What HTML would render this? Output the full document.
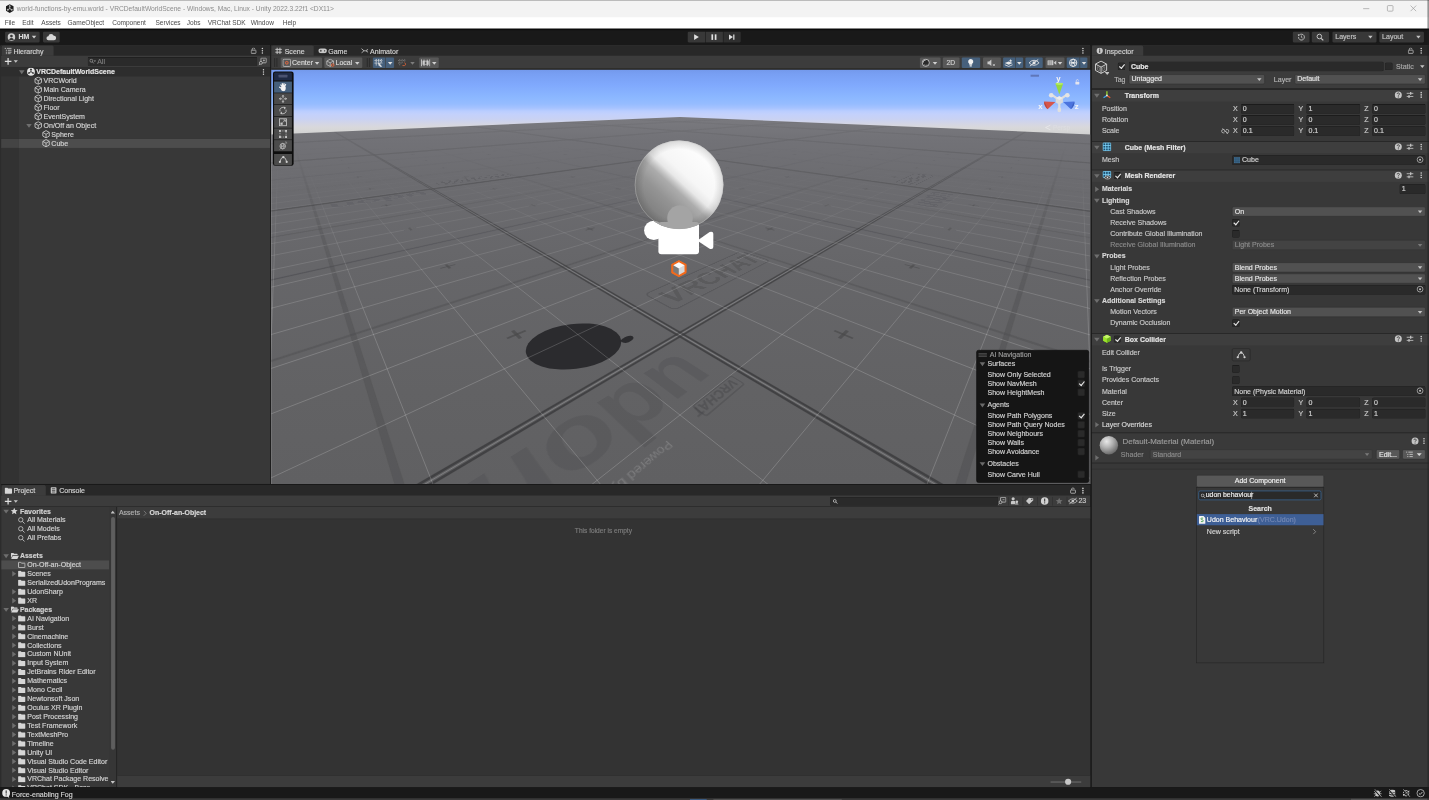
<!DOCTYPE html>
<html lang="en"><head><meta charset="utf-8"><title>Unity Editor</title>
<style>
html,body{margin:0;padding:0;background:#191919;}
body{width:1429px;height:800px;overflow:hidden;position:relative;font-family:"Liberation Sans",sans-serif;}
#root{position:absolute;left:0;top:0;width:2560px;height:1434px;transform:scale(0.558203);transform-origin:0 0;filter:saturate(1.001);overflow:hidden;font-size:12.6px;color:#c8c8c8;line-height:16px;-webkit-text-stroke:0.3px;}
#root div,#root span,#root svg{position:absolute;box-sizing:border-box;white-space:nowrap;}
.t{color:#c8c8c8;height:16px;line-height:16px;}
.b{font-weight:bold;font-size:12.5px;}
.dim{color:#8a8a8a;}
.panel{background:#383838;}
.tabbar{background:#282828;}
.tab{background:#3c3c3c;height:19px;top:0;border-top:2px solid #3c3c3c;}
.tb{background:#3c3c3c;border-bottom:1px solid #232323;}
.fld{background:#2a2a2a;border:1px solid #212121;border-top-color:#0d0d0d;border-radius:3px;height:18px;line-height:16px;padding-left:3px;color:#d2d2d2;}
.dd{background:#515151;border:1px solid #303030;border-radius:3px;height:18px;line-height:16px;padding-left:4px;color:#e4e4e4;}
.dd:after{content:"";position:absolute;right:5px;top:6px;border-left:4px solid transparent;border-right:4px solid transparent;border-top:5px solid #c4c4c4;}
.dd.dis{background:#434343;color:#8a8a8a;border-color:#343434;}
.dd.dis:after{border-top-color:#7a7a7a;}
.cb{background:#2a2a2a;border:1px solid #212121;border-top-color:#0d0d0d;border-radius:3px;width:14px;height:14px;}
.cb.on:after{content:"";position:absolute;left:4px;top:0px;width:4px;height:8px;border:solid #e8e8e8;border-width:0 2px 2px 0;transform:rotate(40deg);}
.hdr{background:#3e3e3e;border-top:1px solid #1a1a1a;height:22px;left:0;right:0;}
.arr{width:0;height:0;border-left:5px solid transparent;border-right:5px solid transparent;border-top:7px solid #6e6e6e;margin-left:-1px;}
.arr.r{border-top:5px solid transparent;border-bottom:5px solid transparent;border-left:7px solid #6e6e6e;border-right:none;margin-top:-1px;margin-left:0}
.sep{background:#1a1a1a;height:1px;left:0;right:0;}
.tbtn{background:#383838;border-radius:2px;height:19px;}
.sbtn{background:#585858;border-radius:2px;height:20px;}
.sbtn.on{background:#46607c;}
.ov{background:#151515;}
</style></head><body>
<div id="root">
<div style="left:0;top:81px;width:2px;height:1353px;background:#2c2c2c"></div>
<div style="left:0;top:0;width:2560px;height:40px;background:#f3f3f3;"></div><div style="left:0;top:0;width:2560px;height:1.3px;background:#8e8e8e;"></div>
<svg style="left:10px;top:7px;width:15px;height:17px" viewBox="0 0 15 17"><path d="M7.5 0.5 L14.3 4.4 V12.4 L7.5 16.4 L0.7 12.4 V4.4 Z" fill="#1c1c1c"/><path d="M7.5 8.4 V3 M7.5 8.4 L3 11 M7.5 8.4 L12 11" stroke="#f3f3f3" stroke-width="1.3" fill="none"/><path d="M7.5 3 L5.8 4.6 M7.5 3 L9.2 4.6 M3 11 L3.4 8.8 M3 11 L5.2 11.6 M12 11 L11.6 8.8 M12 11 L9.8 11.6" stroke="#f3f3f3" stroke-width="1" fill="none"/></svg>
<div id="title" style="left:30px;top:6px;height:18px;line-height:18px;font-size:11.95px;color:#8c8c8c;-webkit-text-stroke:0;">world-functions-by-emu.world - VRCDefaultWorldScene - Windows, Mac, Linux - Unity 2022.3.22f1 &lt;DX11&gt;</div>
<svg style="left:2420px;top:0;width:140px;height:31px" viewBox="0 0 140 31"><path d="M22 15.5 H33" stroke="#9a9a9a" stroke-width="1.2"/><rect x="65.5" y="10" width="10" height="10" rx="1.5" fill="none" stroke="#9a9a9a" stroke-width="1.2"/><path d="M107 10 L117 20 M117 10 L107 20" stroke="#9a9a9a" stroke-width="1.2"/></svg>
<div style="left:0;top:31px;width:2560px;height:21px;background:#ffffff;"></div>
<div class="mi" style="left:8.4px;top:32px;height:18px;line-height:18px;font-size:11.7px;color:#4a4a4a;-webkit-text-stroke:0;">File</div>
<div class="mi" style="left:39.8px;top:32px;height:18px;line-height:18px;font-size:11.7px;color:#4a4a4a;-webkit-text-stroke:0;">Edit</div>
<div class="mi" style="left:74.0px;top:32px;height:18px;line-height:18px;font-size:11.7px;color:#4a4a4a;-webkit-text-stroke:0;">Assets</div>
<div class="mi" style="left:121.0px;top:32px;height:18px;line-height:18px;font-size:11.7px;color:#4a4a4a;-webkit-text-stroke:0;">GameObject</div>
<div class="mi" style="left:201.0px;top:32px;height:18px;line-height:18px;font-size:11.7px;color:#4a4a4a;-webkit-text-stroke:0;">Component</div>
<div class="mi" style="left:278.6px;top:32px;height:18px;line-height:18px;font-size:11.7px;color:#4a4a4a;-webkit-text-stroke:0;">Services</div>
<div class="mi" style="left:334.6px;top:32px;height:18px;line-height:18px;font-size:11.7px;color:#4a4a4a;-webkit-text-stroke:0;">Jobs</div>
<div class="mi" style="left:372.0px;top:32px;height:18px;line-height:18px;font-size:11.7px;color:#4a4a4a;-webkit-text-stroke:0;">VRChat SDK</div>
<div class="mi" style="left:449.0px;top:32px;height:18px;line-height:18px;font-size:11.7px;color:#4a4a4a;-webkit-text-stroke:0;">Window</div>
<div class="mi" style="left:506.6px;top:32px;height:18px;line-height:18px;font-size:11.7px;color:#4a4a4a;-webkit-text-stroke:0;">Help</div>
<div style="left:0;top:51px;width:2560px;height:30px;background:#191919;"></div>
<div style="left:0;top:52px;width:2560px;height:2px;background:#0a0a0a;"></div>
<div class="tbtn" style="left:9px;top:57px;width:62px;height:19px;"></div>
<svg style="left:13px;top:59px;width:15px;height:15px" viewBox="0 0 15 15"><circle cx="7.5" cy="7.5" r="6.8" fill="#d0d0d0"/><circle cx="7.5" cy="5.6" r="2.4" fill="#383838"/><path d="M3 11.6 Q7.5 6.8 12 11.6 Q7.5 15 3 11.6Z" fill="#383838"/></svg>
<div class="t b" style="left:33px;top:58px;color:#d8d8d8;">HM</div>
<div style="left:57px;top:64px;border-left:4.5px solid transparent;border-right:4.5px solid transparent;border-top:5px solid #d0d0d0;width:0;height:0"></div>
<div class="tbtn" style="left:77px;top:57px;width:30px;height:19px;"></div>
<svg style="left:82px;top:59px;width:20px;height:15px" viewBox="0 0 20 15"><path d="M5 13 a3.6 3.6 0 0 1 -0.3 -7.2 a5 5 0 0 1 9.6 -0.6 a3.9 3.9 0 0 1 0.7 7.8 Z" fill="#d8d8d8"/></svg>
<div style="left:1231.5px;top:57px;width:31px;height:19px;background:#383838;border-radius:2px 0 0 2px"></div>
<div style="left:1263.5px;top:57px;width:31px;height:19px;background:#383838;border-radius:0"></div>
<div style="left:1295.5px;top:57px;width:31px;height:19px;background:#2f2f2f;border-radius:0 2px 2px 0"></div>
<svg style="left:1231px;top:57px;width:96px;height:19px" viewBox="0 0 96 19"><path d="M12.5 4.5 L21 9.5 L12.5 14.5Z" fill="#e0e0e0"/><rect x="43.5" y="4.5" width="3" height="10" fill="#e0e0e0"/><rect x="49.5" y="4.5" width="3" height="10" fill="#e0e0e0"/><path d="M75 4.8 L82 9.5 L75 14.2Z" fill="#e0e0e0"/><rect x="82.5" y="4.8" width="2.2" height="9.4" fill="#e0e0e0"/></svg>
<div class="tbtn" style="left:2316px;top:57px;width:30px;"></div>
<svg style="left:2323px;top:59px;width:16px;height:15px" viewBox="0 0 16 15"><path d="M3.2 7.5 a5.3 5.3 0 1 0 1.6 -3.8" fill="none" stroke="#d0d0d0" stroke-width="1.4"/><path d="M2 2.2 L5.6 3.2 L3 5.9Z" fill="#d0d0d0"/><path d="M8.4 4.6 V7.8 L10.6 9.2" fill="none" stroke="#d0d0d0" stroke-width="1.3"/></svg>
<div class="tbtn" style="left:2350px;top:57px;width:31px;"></div>
<svg style="left:2357px;top:59px;width:16px;height:15px" viewBox="0 0 16 15"><circle cx="6.6" cy="6.4" r="4.1" fill="none" stroke="#d0d0d0" stroke-width="1.6"/><path d="M9.8 9.6 L13.6 13.4" stroke="#d0d0d0" stroke-width="2"/></svg>
<div class="tbtn" style="left:2387px;top:57px;width:79px;"></div>
<div class="t" style="left:2392px;top:58px;color:#c4c4c4;">Layers</div>
<div style="left:2451px;top:64px;border-left:4.5px solid transparent;border-right:4.5px solid transparent;border-top:5px solid #c4c4c4;width:0;height:0"></div>
<div class="tbtn" style="left:2471px;top:57px;width:80px;"></div>
<div class="t" style="left:2476px;top:58px;color:#c4c4c4;">Layout</div>
<div style="left:2537px;top:64px;border-left:4.5px solid transparent;border-right:4.5px solid transparent;border-top:5px solid #c4c4c4;width:0;height:0"></div>
<div class="panel" style="left:2px;top:81px;width:482px;height:786px;overflow:hidden">
<div class="tabbar" style="left:0;top:0;width:482px;height:19px"></div>
<div class="tab" style="left:1px;width:93px;border-radius:3px 3px 0 0"></div>
<svg style="left:5.5px;top:4px;width:13px;height:12px" viewBox="0 0 13 12"><path d="M0 1.5 H3 M4.5 1.5 H13 M2.5 5 H4.5 M6 5 H13 M2.5 8.5 H4.5 M6 8.5 H13 M2.5 11.5 H4.5 M6 11.5 H11" stroke="#c8c8c8" stroke-width="1.6"/></svg>
<div class="t" style="left:22px;top:3px;color:#d2d2d2">Hierarchy</div>
<svg style="left:446px;top:3px;width:10.5px;height:11.5px;margin:1px 0 0 1px" viewBox="0 0 12 13"><rect x="1" y="5.5" width="10" height="6.5" rx="1" fill="none" stroke="#c4c4c4" stroke-width="1.6"/><path d="M3.2 5.5 V3.6 a2.6 2.6 0 0 1 5.2 0" fill="none" stroke="#c4c4c4" stroke-width="1.5"/></svg>
<svg style="left:466px;top:3px;width:4px;height:14px" viewBox="0 0 4 14"><circle cx="2" cy="3" r="1.45" fill="#d0d0d0"/><circle cx="2" cy="7" r="1.45" fill="#d0d0d0"/><circle cx="2" cy="11" r="1.45" fill="#d0d0d0"/></svg>
<div class="tb" style="left:0;top:19px;width:482px;height:21px"></div>
<svg style="left:6px;top:22px;width:26px;height:14px" viewBox="0 0 26 14"><path d="M6.5 1 V13 M0.5 7 H12.5" stroke="#e0e0e0" stroke-width="2.2"/><path d="M16.5 5 H24 L20.2 9.5Z" fill="#c4c4c4"/></svg>
<div class="fld" style="left:155px;top:21px;width:304px;height:16px;border-radius:2px"></div>
<svg style="left:158px;top:24px;width:12px;height:10px" viewBox="0 0 12 10"><circle cx="3.6" cy="3.8" r="2.6" fill="none" stroke="#9a9a9a" stroke-width="1.4"/><path d="M5.6 5.8 L8 8.6" stroke="#9a9a9a" stroke-width="1.5"/><path d="M8 3.6 H12 L10 6Z" fill="#9a9a9a"/></svg>
<div class="t dim" style="left:172px;top:21px;color:#7c7c7c">All</div>
<svg style="left:461px;top:22px;width:15px;height:15px" viewBox="0 0 15 15"><rect x="4.5" y="1" width="9.5" height="8.5" rx="1" fill="none" stroke="#c4c4c4" stroke-width="1.4"/><circle cx="4.4" cy="9.6" r="2.6" fill="#3c3c3c" stroke="#c4c4c4" stroke-width="1.4"/><path d="M2.4 11.6 L0.6 13.8" stroke="#c4c4c4" stroke-width="1.5"/><path d="M8 5.2 H11.5 M9.7 3.4 V7" stroke="#c4c4c4" stroke-width="1.2"/></svg>
<div style="left:0;top:56px;width:32px;height:746px;background:#323232"></div>
<div style="left:0;top:40px;width:482px;height:16px;background:#2d2d2d"></div>
<div style="left:32px;top:168px;width:450px;height:16px;background:#4d4d4d"></div>
<div style="left:0px;top:168px;width:32px;height:16px;background:#444444"></div>
<div class="arr" style="left:33px;top:45px"></div>
<svg style="left:46px;top:40px;width:15px;height:15px" viewBox="0 0 15 15"><circle cx="7.5" cy="7.5" r="7" fill="#e6e6e6"/><path d="M7.5 7.5 V2.2 M7.5 7.5 L3 10.2 M7.5 7.5 L12 10.2" stroke="#2d2d2d" stroke-width="1.6"/><path d="M7.5 1.6 L5.3 4.2 H9.7Z M2.3 10.6 L5.6 11.2 L3.6 7.6Z M12.7 10.6 L9.4 11.2 L11.4 7.6Z" fill="#2d2d2d"/></svg>
<div class="t b" style="left:63px;top:40px;color:#e4e4e4">VRCDefaultWorldScene</div>
<svg style="left:468px;top:41px;width:4px;height:14px" viewBox="0 0 4 14"><circle cx="2" cy="3" r="1.45" fill="#d0d0d0"/><circle cx="2" cy="7" r="1.45" fill="#d0d0d0"/><circle cx="2" cy="11" r="1.45" fill="#d0d0d0"/></svg>
<svg style="left:59px;top:56px;width:15px;height:15px" viewBox="0 0 15 15"><path d="M7.5 1 L13.3 4.2 V10.8 L7.5 14 L1.7 10.8 V4.2 Z M1.9 4.3 L7.5 7.5 L13.1 4.3 M7.5 7.5 V14" fill="none" stroke="#cfcfcf" stroke-width="1.5" stroke-linejoin="round"/></svg>
<div class="t" style="left:76px;top:56px;color:#d2d2d2">VRCWorld</div>
<svg style="left:59px;top:72px;width:15px;height:15px" viewBox="0 0 15 15"><path d="M7.5 1 L13.3 4.2 V10.8 L7.5 14 L1.7 10.8 V4.2 Z M1.9 4.3 L7.5 7.5 L13.1 4.3 M7.5 7.5 V14" fill="none" stroke="#cfcfcf" stroke-width="1.5" stroke-linejoin="round"/></svg>
<div class="t" style="left:76px;top:72px;color:#d2d2d2">Main Camera</div>
<svg style="left:59px;top:88px;width:15px;height:15px" viewBox="0 0 15 15"><path d="M7.5 1 L13.3 4.2 V10.8 L7.5 14 L1.7 10.8 V4.2 Z M1.9 4.3 L7.5 7.5 L13.1 4.3 M7.5 7.5 V14" fill="none" stroke="#cfcfcf" stroke-width="1.5" stroke-linejoin="round"/></svg>
<div class="t" style="left:76px;top:88px;color:#d2d2d2">Directional Light</div>
<svg style="left:59px;top:104px;width:15px;height:15px" viewBox="0 0 15 15"><path d="M7.5 1 L13.3 4.2 V10.8 L7.5 14 L1.7 10.8 V4.2 Z M1.9 4.3 L7.5 7.5 L13.1 4.3 M7.5 7.5 V14" fill="none" stroke="#cfcfcf" stroke-width="1.5" stroke-linejoin="round"/></svg>
<div class="t" style="left:76px;top:104px;color:#d2d2d2">Floor</div>
<svg style="left:59px;top:120px;width:15px;height:15px" viewBox="0 0 15 15"><path d="M7.5 1 L13.3 4.2 V10.8 L7.5 14 L1.7 10.8 V4.2 Z M1.9 4.3 L7.5 7.5 L13.1 4.3 M7.5 7.5 V14" fill="none" stroke="#cfcfcf" stroke-width="1.5" stroke-linejoin="round"/></svg>
<div class="t" style="left:76px;top:120px;color:#d2d2d2">EventSystem</div>
<div class="arr" style="left:46px;top:141px"></div>
<svg style="left:59px;top:136px;width:15px;height:15px" viewBox="0 0 15 15"><path d="M7.5 1 L13.3 4.2 V10.8 L7.5 14 L1.7 10.8 V4.2 Z M1.9 4.3 L7.5 7.5 L13.1 4.3 M7.5 7.5 V14" fill="none" stroke="#cfcfcf" stroke-width="1.5" stroke-linejoin="round"/></svg>
<div class="t" style="left:76px;top:136px;color:#d2d2d2">On/Off an Object</div>
<svg style="left:73px;top:152px;width:15px;height:15px" viewBox="0 0 15 15"><path d="M7.5 1 L13.3 4.2 V10.8 L7.5 14 L1.7 10.8 V4.2 Z M1.9 4.3 L7.5 7.5 L13.1 4.3 M7.5 7.5 V14" fill="none" stroke="#cfcfcf" stroke-width="1.5" stroke-linejoin="round"/></svg>
<div class="t" style="left:90px;top:152px;color:#d2d2d2">Sphere</div>
<svg style="left:73px;top:168px;width:15px;height:15px" viewBox="0 0 15 15"><path d="M7.5 1 L13.3 4.2 V10.8 L7.5 14 L1.7 10.8 V4.2 Z M1.9 4.3 L7.5 7.5 L13.1 4.3 M7.5 7.5 V14" fill="none" stroke="#cfcfcf" stroke-width="1.5" stroke-linejoin="round"/></svg>
<div class="t" style="left:90px;top:168px;color:#d2d2d2">Cube</div>
</div>
<div class="panel" style="left:486px;top:81px;width:1467px;height:786px;overflow:hidden;background:#3c3c3c">
<div class="tabbar" style="left:0;top:0;width:1467px;height:19px"></div>
<div class="tab" style="left:0px;width:76px;border-radius:3px 3px 0 0"></div>
<svg style="left:7px;top:4px;width:12px;height:12px" viewBox="0 0 12 12"><path d="M0 3.5 H12 M0 8.5 H12 M3.5 0 V12 M8.5 0 V12" stroke="#c8c8c8" stroke-width="1.7"/></svg>
<div class="t" style="left:24px;top:3px;color:#d2d2d2">Scene</div>
<svg style="left:84px;top:5px;width:16px;height:10px" viewBox="0 0 16 10"><path d="M4.5 0.8 H11.5 A4.2 4.2 0 0 1 11.5 9.2 H4.5 A4.2 4.2 0 0 1 4.5 0.8Z" fill="#c8c8c8"/><path d="M3 5 H6.4 M4.7 3.3 V6.7" stroke="#282828" stroke-width="1.2"/><circle cx="11.5" cy="5" r="1.2" fill="#282828"/></svg>
<div class="t" style="left:102px;top:3px;color:#d2d2d2">Game</div>
<svg style="left:161px;top:5px;width:13px;height:10px" viewBox="0 0 13 10"><path d="M0.5 1 L5 5 L0.5 9 M5 5 H8 M8.2 5 L12.5 2.4 M8.2 5 L12.5 7.6" fill="none" stroke="#c8c8c8" stroke-width="1.5"/></svg>
<div class="t" style="left:177px;top:3px;color:#d2d2d2">Animator</div>
<svg style="left:1452px;top:3px;width:4px;height:14px" viewBox="0 0 4 14"><circle cx="2" cy="3" r="1.45" fill="#d0d0d0"/><circle cx="2" cy="7" r="1.45" fill="#d0d0d0"/><circle cx="2" cy="11" r="1.45" fill="#d0d0d0"/></svg>
<div style="left:0;top:19px;width:1467px;height:25px;background:#3c3c3c;border-bottom:2px solid #1a1509"></div>
<div style="left:5px;top:23px;width:1.5px;height:16px;background:#2c2c2c"></div>
<div style="left:9px;top:23px;width:1.5px;height:16px;background:#2c2c2c"></div>
<div class="sbtn" style="left:17px;top:22px;width:74px;height:19px"></div>
<svg style="left:20px;top:24px;width:16px;height:15px" viewBox="0 0 16 15"><rect x="1" y="1" width="13.5" height="13" rx="2" fill="none" stroke="#c8c8c8" stroke-width="1.4"/><circle cx="7.8" cy="7.5" r="2.4" fill="none" stroke="#f0683a" stroke-width="1.6"/></svg>
<div class="t" style="left:37px;top:23.5px;color:#d8d8d8">Center</div>
<div style="left:78.0px;top:29.5px;border-left:4px solid transparent;border-right:4px solid transparent;border-top:5px solid #d0d0d0;width:0;height:0"></div>
<div class="sbtn" style="left:95px;top:22px;width:68px;height:19px"></div>
<svg style="left:98px;top:24px;width:17px;height:16px" viewBox="0 0 17 16"><path d="M7.5 1 L13.5 4.3 V10.8 L7.5 14 L1.5 10.8 V4.3Z M1.7 4.4 L7.5 7.5 L13.3 4.4 M7.5 7.5 V14" fill="none" stroke="#c8c8c8" stroke-width="1.3"/><circle cx="12" cy="11.6" r="2.3" fill="#585858" stroke="#f0683a" stroke-width="1.5"/></svg>
<div class="t" style="left:115px;top:23.5px;color:#d8d8d8">Local</div>
<div style="left:150.0px;top:29.5px;border-left:4px solid transparent;border-right:4px solid transparent;border-top:5px solid #d0d0d0;width:0;height:0"></div>
<div style="left:171px;top:23px;width:1.5px;height:16px;background:#2c2c2c"></div>
<div style="left:175px;top:23px;width:1.5px;height:16px;background:#2c2c2c"></div>
<div class="sbtn on" style="left:181.5px;top:22px;width:22.5px;height:19px;border-radius:2px 0 0 2px"></div>
<svg style="left:184px;top:24px;width:17px;height:15px" viewBox="0 0 17 15"><path d="M1 3.5 H15 M1 8 H15 M4 0.5 V13 M8.5 0.5 V13 M13 0.5 V8" stroke="#e8e8e8" stroke-width="1.5" stroke-dasharray="2.2 1"/><path d="M8.5 8 L13.5 14 L10.5 13.5Z" fill="#e8e8e8" stroke="#e8e8e8" stroke-width="1.4"/></svg>
<div class="sbtn on" style="left:205px;top:22px;width:15px;height:19px;border-radius:0 2px 2px 0"></div>
<div style="left:208.5px;top:29.5px;border-left:4px solid transparent;border-right:4px solid transparent;border-top:5px solid #e0e0e0;width:0;height:0"></div>
<svg style="left:226px;top:24px;width:17px;height:15px" viewBox="0 0 17 15"><path d="M1 3.5 H14 M1 8 H8 M4 0.5 V13 M8.5 0.5 V8 M13 0.5 V6" stroke="#8c8c8c" stroke-width="1.3" stroke-dasharray="1.6 1.4"/><path d="M9 12.5 H12.5 A2.6 2.6 0 0 0 12.5 7.4" fill="none" stroke="#d8633a" stroke-width="1.5"/></svg>
<div style="left:248.5px;top:29.5px;border-left:4px solid transparent;border-right:4px solid transparent;border-top:5px solid #7c7c7c;width:0;height:0"></div>
<div class="sbtn" style="left:265px;top:22px;width:35px;height:19px"></div>
<svg style="left:268px;top:25px;width:17px;height:13px" viewBox="0 0 17 13"><path d="M1 0 V13 M16 0 V13" stroke="#d0d0d0" stroke-width="1.6"/><path d="M3 3 H14 V10 H3Z" fill="#c8c8c8"/><path d="M5.6 0.5 V12.5 M11.4 0.5 V12.5" stroke="#d0d0d0" stroke-width="1.6"/><path d="M7 4 H10 V9 H7Z" fill="#585858"/></svg>
<div style="left:287.5px;top:29.5px;border-left:4px solid transparent;border-right:4px solid transparent;border-top:5px solid #d0d0d0;width:0;height:0"></div>
<div class="sbtn" style="left:1161.5px;top:22px;width:37.0px;height:19px;border-radius:2px"></div>
<svg style="left:1165px;top:24px;width:15px;height:15px" viewBox="0 0 15 15"><circle cx="7.5" cy="7.5" r="6.4" fill="#2a2a2a" stroke="#d0d0d0" stroke-width="1.5"/><path d="M3.5 9 A4.4 4.4 0 0 0 11 10.6 A6 6 0 0 1 3.5 9Z" fill="#d0d0d0"/><path d="M2.6 7.5 A4.9 4.9 0 0 1 7.5 2.6" stroke="#d0d0d0" stroke-width="1.4" fill="none"/></svg>
<div style="left:1185.0px;top:29.5px;border-left:4px solid transparent;border-right:4px solid transparent;border-top:5px solid #d0d0d0;width:0;height:0"></div>
<div class="sbtn" style="left:1202.5px;top:22px;width:30.0px;height:19px;border-radius:2px"></div>
<div class="t" style="left:1202.5px;width:30px;text-align:center;top:23.5px;color:#d0d0d0;font-size:12px">2D</div>
<div class="sbtn on" style="left:1237.0px;top:22px;width:33.0px;height:19px;border-radius:2px"></div>
<svg style="left:1247px;top:24px;width:12px;height:15px" viewBox="0 0 12 15"><path d="M6 0.8 A4.6 4.6 0 0 1 8.6 9.2 V11 H3.4 V9.2 A4.6 4.6 0 0 1 6 0.8Z" fill="#f0f0f0"/><rect x="3.8" y="12" width="4.4" height="2.2" rx="0.8" fill="#f0f0f0"/></svg>
<div class="sbtn" style="left:1274.5px;top:22px;width:32.0px;height:19px;border-radius:2px"></div>
<svg style="left:1282px;top:25px;width:17px;height:13px" viewBox="0 0 17 13"><path d="M1 4 H4 L8 0.8 V12.2 L4 9 H1Z" fill="#c8c8c8"/><path d="M10.5 8.5 L14.5 12.5 M14.5 8.5 L10.5 12.5" stroke="#c8c8c8" stroke-width="1.4"/></svg>
<div class="sbtn on" style="left:1310.5px;top:22px;width:22.0px;height:19px;border-radius:2px 0 0 2px"></div>
<svg style="left:1313px;top:24px;width:17px;height:15px" viewBox="0 0 17 15"><path d="M1 8 L8 5 L15 8 L8 11Z" fill="#e8e8e8"/><path d="M1 11 L8 14 L15 11" fill="none" stroke="#e8e8e8" stroke-width="1.4"/><path d="M11.5 0.5 L12.4 2.8 L14.8 3.2 L12.6 4.4 L13 6.5 L11.5 5 L10 6.5 L10.4 4.4 L8.2 3.2 L10.6 2.8Z" fill="#e8e8e8"/></svg>
<div class="sbtn on" style="left:1333.5px;top:22px;width:13.0px;height:19px;border-radius:0 2px 2px 0"></div>
<div style="left:1336.0px;top:29.5px;border-left:4px solid transparent;border-right:4px solid transparent;border-top:5px solid #e0e0e0;width:0;height:0"></div>
<div class="sbtn on" style="left:1351.0px;top:22px;width:31.0px;height:19px;border-radius:2px"></div>
<svg style="left:1356px;top:24px;width:21px;height:15px" viewBox="0 0 21 15"><path d="M1.5 7.5 Q10.5 -1.5 19.5 7.5 Q10.5 16.5 1.5 7.5Z" fill="none" stroke="#e8e8e8" stroke-width="1.5"/><circle cx="10.5" cy="7.5" r="2.8" fill="#e8e8e8"/><path d="M3 13.5 L18 1.5" stroke="#e8e8e8" stroke-width="1.6"/></svg>
<div class="sbtn" style="left:1387.0px;top:22px;width:34.0px;height:19px;border-radius:2px"></div>
<svg style="left:1390px;top:26px;width:17px;height:11px" viewBox="0 0 17 11"><rect x="0.5" y="1" width="10.5" height="9" rx="1.2" fill="#c8c8c8"/><path d="M11.5 5.5 L16.5 1.6 V9.4Z" fill="#c8c8c8"/><path d="M3.5 1 V10 M7 1 V10" stroke="#585858" stroke-width="1"/></svg>
<div style="left:1409.0px;top:29.5px;border-left:4px solid transparent;border-right:4px solid transparent;border-top:5px solid #d0d0d0;width:0;height:0"></div>
<div class="sbtn on" style="left:1425.0px;top:22px;width:23.0px;height:19px;border-radius:2px 0 0 2px"></div>
<svg style="left:1428px;top:23px;width:17px;height:17px" viewBox="0 0 17 17"><circle cx="8.5" cy="8.5" r="6.6" fill="none" stroke="#f0f0f0" stroke-width="1.6"/><ellipse cx="8.5" cy="8.5" rx="3" ry="6.6" fill="none" stroke="#f0f0f0" stroke-width="1.3"/><path d="M2 8.5 H15" stroke="#f0f0f0" stroke-width="1.3"/><circle cx="8.5" cy="8.5" r="2" fill="#f0f0f0"/></svg>
<div class="sbtn on" style="left:1449.0px;top:22px;width:13.0px;height:19px;border-radius:0 2px 2px 0"></div>
<div style="left:1451.5px;top:29.5px;border-left:4px solid transparent;border-right:4px solid transparent;border-top:5px solid #e0e0e0;width:0;height:0"></div>
</div>
<svg style="left:486px;top:125px;width:1467px;height:742px" viewBox="271.29 69.78 818.88 414.19" preserveAspectRatio="none">
<defs>
<linearGradient id="sky" x1="0" y1="69" x2="0" y2="135" gradientUnits="userSpaceOnUse">
<stop offset="0.000" stop-color="#7398ea"/>
<stop offset="0.076" stop-color="#789ff3"/>
<stop offset="0.242" stop-color="#80a9fd"/>
<stop offset="0.439" stop-color="#8cb8ff"/>
<stop offset="0.530" stop-color="#96bcff"/>
<stop offset="0.591" stop-color="#a6c3ff"/>
<stop offset="0.636" stop-color="#b9cdff"/>
<stop offset="0.682" stop-color="#c3d1fc"/>
<stop offset="0.758" stop-color="#c9d2f3"/>
<stop offset="0.818" stop-color="#d2d5e7"/>
<stop offset="0.879" stop-color="#d8d8dc"/>
<stop offset="0.939" stop-color="#d6d6d6"/>
<stop offset="1.000" stop-color="#cfcfcf"/>
</linearGradient>
<linearGradient id="flr" x1="0" y1="117" x2="0" y2="484" gradientUnits="userSpaceOnUse"><stop offset="0" stop-color="#7a7a7f"/><stop offset="0.06" stop-color="#727277"/><stop offset="0.17" stop-color="#6c6c70"/><stop offset="0.4" stop-color="#666669"/><stop offset="0.75" stop-color="#626264"/><stop offset="1" stop-color="#606062"/></linearGradient>
<linearGradient id="gfade" x1="0" y1="117" x2="0" y2="484" gradientUnits="userSpaceOnUse"><stop offset="0" stop-color="#fff" stop-opacity="0"/><stop offset="0.13" stop-color="#fff" stop-opacity="0"/><stop offset="0.2" stop-color="#fff" stop-opacity="0.12"/><stop offset="0.3" stop-color="#fff" stop-opacity="0.4"/><stop offset="0.45" stop-color="#fff" stop-opacity="0.78"/><stop offset="0.65" stop-color="#fff" stop-opacity="1"/><stop offset="1" stop-color="#fff" stop-opacity="1"/></linearGradient>
<mask id="gm" maskUnits="userSpaceOnUse" x="270" y="100" width="822" height="386"><rect x="270" y="100" width="822" height="386" fill="url(#gfade)"/></mask>
<linearGradient id="dfade" x1="0" y1="117" x2="0" y2="484" gradientUnits="userSpaceOnUse"><stop offset="0" stop-color="#fff" stop-opacity="0.1"/><stop offset="0.06" stop-color="#fff" stop-opacity="0.2"/><stop offset="0.15" stop-color="#fff" stop-opacity="0.42"/><stop offset="0.3" stop-color="#fff" stop-opacity="0.7"/><stop offset="0.5" stop-color="#fff" stop-opacity="0.92"/><stop offset="0.7" stop-color="#fff" stop-opacity="1"/><stop offset="1" stop-color="#fff" stop-opacity="1"/></linearGradient>
<mask id="dm" maskUnits="userSpaceOnUse" x="270" y="100" width="822" height="386"><rect x="270" y="100" width="822" height="386" fill="url(#dfade)"/></mask>
<linearGradient id="sph" x1="0.85" y1="0.13" x2="0.17" y2="0.87"><stop offset="0" stop-color="#ffffff"/><stop offset="0.38" stop-color="#f6f6f6"/><stop offset="0.47" stop-color="#e8e8e8"/><stop offset="0.52" stop-color="#c8c8c8"/><stop offset="0.57" stop-color="#acacac"/><stop offset="0.72" stop-color="#949494"/><stop offset="0.88" stop-color="#868686"/><stop offset="1" stop-color="#7e7e7e"/></linearGradient>
<linearGradient id="dfade2" x1="0" y1="117" x2="0" y2="484" gradientUnits="userSpaceOnUse"><stop offset="0" stop-color="#fff" stop-opacity="0"/><stop offset="0.08" stop-color="#fff" stop-opacity="0"/><stop offset="0.16" stop-color="#fff" stop-opacity="0.3"/><stop offset="0.3" stop-color="#fff" stop-opacity="0.7"/><stop offset="0.5" stop-color="#fff" stop-opacity="0.92"/><stop offset="0.7" stop-color="#fff" stop-opacity="1"/><stop offset="1" stop-color="#fff" stop-opacity="1"/></linearGradient>
<mask id="dm2" maskUnits="userSpaceOnUse" x="270" y="100" width="822" height="386"><rect x="270" y="100" width="822" height="386" fill="url(#dfade2)"/></mask>
<radialGradient id="sph2" cx="0.5" cy="0.5" r="0.5"><stop offset="0" stop-color="#000" stop-opacity="0"/><stop offset="0.8" stop-color="#000" stop-opacity="0"/><stop offset="1" stop-color="#000" stop-opacity="0.14"/></radialGradient>
<clipPath id="sphc"><circle cx="679.1" cy="184.8" r="44.3"/></clipPath>
<clipPath id="flc"><polygon points="268.0,134.6 680.0,117.0 1094.0,134.6 1094.0,488.0 268.0,488.0"/></clipPath>
</defs>
<rect x="270" y="68" width="822" height="420" fill="url(#sky)"/>
<polygon points="268.0,134.6 680.0,117.0 1094.0,134.6 1094.0,488.0 268.0,488.0" fill="url(#flr)"/>
<g clip-path="url(#flc)">
<g mask="url(#dm2)">
<polygon points="672.6,117.3 1098.0,136.1 1098.0,136.2 672.3,117.3" fill="#4c4c4f" fill-opacity="0.42" stroke="#4c4c4f" stroke-opacity="0.16" stroke-width="0.35"/>
<polygon points="659.8,117.9 1098.0,138.5 1098.0,138.5 659.7,117.9" fill="#47474a" fill-opacity="0.55" stroke="#47474a" stroke-opacity="0.3" stroke-width="0.4"/>
<polygon points="646.4,118.4 1098.0,141.2 1098.0,141.3 646.1,118.5" fill="#4c4c4f" fill-opacity="0.42" stroke="#4c4c4f" stroke-opacity="0.16" stroke-width="0.35"/>
<polygon points="616.6,119.7 1098.0,147.9 1098.0,148.0 616.3,119.7" fill="#4c4c4f" fill-opacity="0.42" stroke="#4c4c4f" stroke-opacity="0.16" stroke-width="0.35"/>
<polygon points="600.0,120.4 1098.0,152.2 1098.0,152.3 599.8,120.4" fill="#47474a" fill-opacity="0.55" stroke="#47474a" stroke-opacity="0.3" stroke-width="0.4"/>
<polygon points="582.3,121.2 1098.0,157.3 1098.0,157.4 582.0,121.2" fill="#4c4c4f" fill-opacity="0.42" stroke="#4c4c4f" stroke-opacity="0.16" stroke-width="0.35"/>
<polygon points="542.7,122.9 1098.0,171.2 1098.0,171.4 542.3,122.9" fill="#4c4c4f" fill-opacity="0.42" stroke="#4c4c4f" stroke-opacity="0.16" stroke-width="0.35"/>
<polygon points="520.3,123.8 1098.0,181.1 1098.0,181.3 520.0,123.8" fill="#47474a" fill-opacity="0.55" stroke="#47474a" stroke-opacity="0.3" stroke-width="0.4"/>
<polygon points="496.1,124.8 1098.0,194.1 1098.0,194.4 495.7,124.9" fill="#4c4c4f" fill-opacity="0.42" stroke="#4c4c4f" stroke-opacity="0.16" stroke-width="0.35"/>
<polygon points="440.8,127.2 1098.0,238.6 1098.0,239.2 440.2,127.2" fill="#4c4c4f" fill-opacity="0.42" stroke="#4c4c4f" stroke-opacity="0.16" stroke-width="0.35"/>
<polygon points="408.9,128.6 1098.0,281.6 1098.0,282.4 408.4,128.6" fill="#47474a" fill-opacity="0.55" stroke="#47474a" stroke-opacity="0.3" stroke-width="0.4"/>
<polygon points="373.8,130.1 1098.0,362.8 1098.0,365.0 373.1,130.1" fill="#4c4c4f" fill-opacity="0.42" stroke="#4c4c4f" stroke-opacity="0.16" stroke-width="0.35"/>
<polygon points="291.1,133.6 407.0,492.0 396.8,492.0 290.3,133.6" fill="#4c4c4f" fill-opacity="0.42" stroke="#4c4c4f" stroke-opacity="0.16" stroke-width="0.35"/>
<polygon points="687.4,117.3 262.0,136.1 262.0,136.2 687.7,117.3" fill="#4c4c4f" fill-opacity="0.42" stroke="#4c4c4f" stroke-opacity="0.16" stroke-width="0.35"/>
<polygon points="700.2,117.9 262.0,138.5 262.0,138.5 700.3,117.9" fill="#47474a" fill-opacity="0.55" stroke="#47474a" stroke-opacity="0.3" stroke-width="0.4"/>
<polygon points="713.6,118.4 262.0,141.2 262.0,141.3 713.9,118.5" fill="#4c4c4f" fill-opacity="0.42" stroke="#4c4c4f" stroke-opacity="0.16" stroke-width="0.35"/>
<polygon points="743.4,119.7 262.0,147.9 262.0,148.0 743.7,119.7" fill="#4c4c4f" fill-opacity="0.42" stroke="#4c4c4f" stroke-opacity="0.16" stroke-width="0.35"/>
<polygon points="760.0,120.4 262.0,152.2 262.0,152.3 760.2,120.4" fill="#47474a" fill-opacity="0.55" stroke="#47474a" stroke-opacity="0.3" stroke-width="0.4"/>
<polygon points="777.7,121.2 262.0,157.3 262.0,157.4 778.0,121.2" fill="#4c4c4f" fill-opacity="0.42" stroke="#4c4c4f" stroke-opacity="0.16" stroke-width="0.35"/>
<polygon points="817.3,122.9 262.0,171.2 262.0,171.4 817.7,122.9" fill="#4c4c4f" fill-opacity="0.42" stroke="#4c4c4f" stroke-opacity="0.16" stroke-width="0.35"/>
<polygon points="839.7,123.8 262.0,181.1 262.0,181.3 840.0,123.8" fill="#47474a" fill-opacity="0.55" stroke="#47474a" stroke-opacity="0.3" stroke-width="0.4"/>
<polygon points="863.9,124.8 262.0,194.1 262.0,194.4 864.3,124.9" fill="#4c4c4f" fill-opacity="0.42" stroke="#4c4c4f" stroke-opacity="0.16" stroke-width="0.35"/>
<polygon points="919.2,127.2 262.0,238.6 262.0,239.2 919.8,127.2" fill="#4c4c4f" fill-opacity="0.42" stroke="#4c4c4f" stroke-opacity="0.16" stroke-width="0.35"/>
<polygon points="951.1,128.6 262.0,281.6 262.0,282.4 951.6,128.6" fill="#47474a" fill-opacity="0.55" stroke="#47474a" stroke-opacity="0.3" stroke-width="0.4"/>
<polygon points="986.2,130.1 262.0,362.8 262.0,365.0 986.9,130.1" fill="#4c4c4f" fill-opacity="0.42" stroke="#4c4c4f" stroke-opacity="0.16" stroke-width="0.35"/>
<polygon points="1068.9,133.6 953.0,492.0 963.2,492.0 1069.7,133.6" fill="#4c4c4f" fill-opacity="0.42" stroke="#4c4c4f" stroke-opacity="0.16" stroke-width="0.35"/>
</g>
<g mask="url(#dm)">
<polygon points="632.0,119.1 1098.0,144.3 1098.0,144.3 631.9,119.1" fill="#3c3c3e" fill-opacity="0.85" stroke="#3c3c3e" stroke-opacity="0.5" stroke-width="0.4"/>
<polygon points="631.7,119.1 1098.0,144.4 1098.0,144.4 631.6,119.1" fill="#3c3c3e" fill-opacity="0.85" stroke="#3c3c3e" stroke-opacity="0.5" stroke-width="0.4"/>
<polygon points="563.4,122.0 1098.0,163.5 1098.0,163.5 563.2,122.0" fill="#3c3c3e" fill-opacity="0.85" stroke="#3c3c3e" stroke-opacity="0.5" stroke-width="0.4"/>
<polygon points="563.0,122.0 1098.0,163.6 1098.0,163.7 562.8,122.0" fill="#3c3c3e" fill-opacity="0.85" stroke="#3c3c3e" stroke-opacity="0.5" stroke-width="0.4"/>
<polygon points="469.9,126.0 1098.0,212.0 1098.0,212.2 469.6,126.0" fill="#3c3c3e" fill-opacity="0.85" stroke="#3c3c3e" stroke-opacity="0.5" stroke-width="0.4"/>
<polygon points="469.3,126.0 1098.0,212.4 1098.0,212.6 469.0,126.0" fill="#3c3c3e" fill-opacity="0.85" stroke="#3c3c3e" stroke-opacity="0.5" stroke-width="0.4"/>
<polygon points="335.0,131.7 956.8,492.0 952.1,492.0 334.6,131.7" fill="#3c3c3e" fill-opacity="0.85" stroke="#3c3c3e" stroke-opacity="0.5" stroke-width="0.4"/>
<polygon points="334.1,131.7 944.9,492.0 940.1,492.0 333.7,131.8" fill="#3c3c3e" fill-opacity="0.85" stroke="#3c3c3e" stroke-opacity="0.5" stroke-width="0.4"/>
<polygon points="728.0,119.1 262.0,144.3 262.0,144.3 728.1,119.1" fill="#3c3c3e" fill-opacity="0.85" stroke="#3c3c3e" stroke-opacity="0.5" stroke-width="0.4"/>
<polygon points="728.3,119.1 262.0,144.4 262.0,144.4 728.4,119.1" fill="#3c3c3e" fill-opacity="0.85" stroke="#3c3c3e" stroke-opacity="0.5" stroke-width="0.4"/>
<polygon points="796.6,122.0 262.0,163.5 262.0,163.5 796.8,122.0" fill="#3c3c3e" fill-opacity="0.85" stroke="#3c3c3e" stroke-opacity="0.5" stroke-width="0.4"/>
<polygon points="797.0,122.0 262.0,163.6 262.0,163.7 797.2,122.0" fill="#3c3c3e" fill-opacity="0.85" stroke="#3c3c3e" stroke-opacity="0.5" stroke-width="0.4"/>
<polygon points="890.1,126.0 262.0,212.0 262.0,212.2 890.4,126.0" fill="#3c3c3e" fill-opacity="0.85" stroke="#3c3c3e" stroke-opacity="0.5" stroke-width="0.4"/>
<polygon points="890.7,126.0 262.0,212.4 262.0,212.6 891.0,126.0" fill="#3c3c3e" fill-opacity="0.85" stroke="#3c3c3e" stroke-opacity="0.5" stroke-width="0.4"/>
<polygon points="1025.0,131.7 403.2,492.0 407.9,492.0 1025.4,131.7" fill="#3c3c3e" fill-opacity="0.85" stroke="#3c3c3e" stroke-opacity="0.5" stroke-width="0.4"/>
<polygon points="1025.9,131.7 415.1,492.0 419.9,492.0 1026.3,131.8" fill="#3c3c3e" fill-opacity="0.85" stroke="#3c3c3e" stroke-opacity="0.5" stroke-width="0.4"/>
<polygon points="889.9,149.9 888.5,150.2 889.2,150.3 890.6,150.0" fill="#48484a" fill-opacity="0.7"/><polygon points="887.5,149.9 887.3,150.0 891.6,150.3 891.8,150.2" fill="#48484a" fill-opacity="0.7"/>
<polygon points="948.0,154.6 946.9,155.1 947.8,155.1 948.8,154.7" fill="#48484a" fill-opacity="0.7"/><polygon points="945.4,154.6 945.2,154.7 950.4,155.1 950.6,155.1" fill="#48484a" fill-opacity="0.7"/>
<polygon points="1018.3,160.4 1017.8,160.9 1018.8,161.0 1019.4,160.5" fill="#48484a" fill-opacity="0.7"/><polygon points="1015.5,160.4 1015.4,160.5 1021.7,161.0 1021.8,160.9" fill="#48484a" fill-opacity="0.7"/>
<polygon points="820.3,149.9 818.5,150.2 819.1,150.3 820.9,150.0" fill="#48484a" fill-opacity="0.7"/><polygon points="818.0,149.9 817.6,150.0 821.5,150.3 821.8,150.2" fill="#48484a" fill-opacity="0.7"/>
<polygon points="871.8,154.6 870.1,155.1 870.9,155.1 872.5,154.7" fill="#48484a" fill-opacity="0.7"/><polygon points="869.2,154.6 868.9,154.7 873.5,155.1 873.8,155.1" fill="#48484a" fill-opacity="0.7"/>
<polygon points="934.1,160.4 932.8,160.9 933.8,161.0 935.0,160.5" fill="#48484a" fill-opacity="0.7"/><polygon points="931.2,160.4 931.0,160.5 936.6,161.0 936.9,160.9" fill="#48484a" fill-opacity="0.7"/>
<polygon points="1011.1,167.5 1010.4,168.2 1011.6,168.3 1012.2,167.6" fill="#48484a" fill-opacity="0.7"/><polygon points="1007.9,167.5 1007.8,167.6 1014.8,168.3 1014.9,168.2" fill="#48484a" fill-opacity="0.7"/>
<polygon points="750.7,149.9 748.4,150.2 749.0,150.3 751.3,150.0" fill="#48484a" fill-opacity="0.7"/><polygon points="748.4,149.9 748.0,150.0 751.3,150.3 751.7,150.2" fill="#48484a" fill-opacity="0.7"/>
<polygon points="795.6,154.6 793.4,155.1 794.0,155.1 796.2,154.7" fill="#48484a" fill-opacity="0.7"/><polygon points="793.0,154.6 792.6,154.7 796.6,155.1 797.0,155.1" fill="#48484a" fill-opacity="0.7"/>
<polygon points="849.9,160.4 847.9,160.9 848.7,161.0 850.7,160.5" fill="#48484a" fill-opacity="0.7"/><polygon points="847.0,160.4 846.7,160.5 851.6,161.0 851.9,160.9" fill="#48484a" fill-opacity="0.7"/>
<polygon points="916.9,167.5 915.4,168.2 916.4,168.3 918.0,167.6" fill="#48484a" fill-opacity="0.7"/><polygon points="913.7,167.5 913.5,167.6 919.6,168.3 919.9,168.2" fill="#48484a" fill-opacity="0.7"/>
<polygon points="1001.9,176.5 1001.0,177.4 1002.4,177.5 1003.2,176.7" fill="#48484a" fill-opacity="0.7"/><polygon points="998.3,176.5 998.1,176.7 1006.0,177.5 1006.2,177.4" fill="#48484a" fill-opacity="0.7"/>
<polygon points="681.2,149.9 678.3,150.2 678.8,150.3 681.7,150.0" fill="#48484a" fill-opacity="0.7"/><polygon points="678.8,149.9 678.3,150.0 681.2,150.3 681.7,150.2" fill="#48484a" fill-opacity="0.7"/>
<polygon points="719.4,154.6 716.6,155.1 717.1,155.1 720.0,154.7" fill="#48484a" fill-opacity="0.7"/><polygon points="716.8,154.6 716.3,154.7 719.7,155.1 720.2,155.1" fill="#48484a" fill-opacity="0.7"/>
<polygon points="765.6,160.4 762.9,160.9 763.6,161.0 766.3,160.5" fill="#48484a" fill-opacity="0.7"/><polygon points="762.8,160.4 762.3,160.5 766.5,161.0 767.0,160.9" fill="#48484a" fill-opacity="0.7"/>
<polygon points="822.8,167.5 820.3,168.2 821.2,168.3 823.7,167.6" fill="#48484a" fill-opacity="0.7"/><polygon points="819.6,167.5 819.2,167.6 824.4,168.3 824.8,168.2" fill="#48484a" fill-opacity="0.7"/>
<polygon points="895.2,176.5 893.2,177.4 894.3,177.5 896.3,176.7" fill="#48484a" fill-opacity="0.7"/><polygon points="891.6,176.5 891.3,176.7 898.0,177.5 898.3,177.4" fill="#48484a" fill-opacity="0.7"/>
<polygon points="989.9,188.3 988.8,189.4 990.3,189.6 991.4,188.5" fill="#48484a" fill-opacity="0.7"/><polygon points="985.8,188.3 985.6,188.5 994.5,189.6 994.7,189.4" fill="#48484a" fill-opacity="0.7"/>
<polygon points="611.6,149.9 608.3,150.2 608.7,150.3 612.0,150.0" fill="#48484a" fill-opacity="0.7"/><polygon points="609.3,149.9 608.7,150.0 611.0,150.3 611.6,150.2" fill="#48484a" fill-opacity="0.7"/>
<polygon points="643.2,154.6 639.8,155.1 640.3,155.1 643.7,154.7" fill="#48484a" fill-opacity="0.7"/><polygon points="640.6,154.6 640.0,154.7 642.9,155.1 643.4,155.1" fill="#48484a" fill-opacity="0.7"/>
<polygon points="681.4,160.4 678.0,160.9 678.6,161.0 682.0,160.5" fill="#48484a" fill-opacity="0.7"/><polygon points="678.6,160.4 678.0,160.5 681.4,161.0 682.0,160.9" fill="#48484a" fill-opacity="0.7"/>
<polygon points="728.7,167.5 725.3,168.2 726.0,168.3 729.4,167.6" fill="#48484a" fill-opacity="0.7"/><polygon points="725.5,167.5 724.9,167.6 729.2,168.3 729.8,168.2" fill="#48484a" fill-opacity="0.7"/>
<polygon points="788.5,176.5 785.3,177.4 786.2,177.5 789.4,176.7" fill="#48484a" fill-opacity="0.7"/><polygon points="784.9,176.5 784.4,176.7 789.9,177.5 790.4,177.4" fill="#48484a" fill-opacity="0.7"/>
<polygon points="866.8,188.3 864.1,189.4 865.3,189.6 868.0,188.5" fill="#48484a" fill-opacity="0.7"/><polygon points="862.6,188.3 862.2,188.5 869.6,189.6 870.0,189.4" fill="#48484a" fill-opacity="0.7"/>
<polygon points="973.6,204.4 972.0,206.0 973.7,206.2 975.3,204.7" fill="#48484a" fill-opacity="0.7"/><polygon points="968.6,204.4 968.4,204.7 978.7,206.2 979.0,206.0" fill="#48484a" fill-opacity="0.7"/>
<polygon points="542.0,149.9 538.2,150.2 538.5,150.3 542.4,150.0" fill="#48484a" fill-opacity="0.7"/><polygon points="539.7,149.9 539.1,150.0 540.9,150.3 541.5,150.2" fill="#48484a" fill-opacity="0.7"/>
<polygon points="567.0,154.6 563.0,155.1 563.4,155.1 567.4,154.7" fill="#48484a" fill-opacity="0.7"/><polygon points="564.4,154.6 563.8,154.7 566.0,155.1 566.6,155.1" fill="#48484a" fill-opacity="0.7"/>
<polygon points="597.2,160.4 593.0,160.9 593.5,161.0 597.7,160.5" fill="#48484a" fill-opacity="0.7"/><polygon points="594.4,160.4 593.7,160.5 596.4,161.0 597.1,160.9" fill="#48484a" fill-opacity="0.7"/>
<polygon points="634.5,167.5 630.2,168.2 630.8,168.3 635.1,167.6" fill="#48484a" fill-opacity="0.7"/><polygon points="631.3,167.5 630.6,167.6 634.0,168.3 634.7,168.2" fill="#48484a" fill-opacity="0.7"/>
<polygon points="681.8,176.5 677.4,177.4 678.2,177.5 682.5,176.7" fill="#48484a" fill-opacity="0.7"/><polygon points="678.2,176.5 677.5,176.7 681.8,177.5 682.6,177.4" fill="#48484a" fill-opacity="0.7"/>
<polygon points="743.6,188.3 739.4,189.4 740.4,189.6 744.6,188.5" fill="#48484a" fill-opacity="0.7"/><polygon points="739.5,188.3 738.8,188.5 744.6,189.6 745.3,189.4" fill="#48484a" fill-opacity="0.7"/>
<polygon points="828.0,204.4 824.2,206.0 825.6,206.2 829.4,204.7" fill="#48484a" fill-opacity="0.7"/><polygon points="823.1,204.4 822.5,204.7 830.6,206.2 831.2,206.0" fill="#48484a" fill-opacity="0.7"/>
<polygon points="949.9,227.6 947.5,230.0 949.6,230.4 952.0,228.0" fill="#48484a" fill-opacity="0.7"/><polygon points="943.9,227.6 943.5,228.0 955.8,230.4 956.1,230.0" fill="#48484a" fill-opacity="0.7"/>
<polygon points="472.5,149.9 468.2,150.2 468.4,150.3 472.7,150.0" fill="#48484a" fill-opacity="0.7"/><polygon points="470.1,149.9 469.4,150.0 470.8,150.3 471.5,150.2" fill="#48484a" fill-opacity="0.7"/>
<polygon points="490.8,154.6 486.2,155.1 486.5,155.1 491.1,154.7" fill="#48484a" fill-opacity="0.7"/><polygon points="488.2,154.6 487.5,154.7 489.1,155.1 489.9,155.1" fill="#48484a" fill-opacity="0.7"/>
<polygon points="513.0,160.4 508.1,160.9 508.4,161.0 513.3,160.5" fill="#48484a" fill-opacity="0.7"/><polygon points="510.1,160.4 509.3,160.5 511.3,161.0 512.1,160.9" fill="#48484a" fill-opacity="0.7"/>
<polygon points="540.4,167.5 535.2,168.2 535.6,168.3 540.8,167.6" fill="#48484a" fill-opacity="0.7"/><polygon points="537.2,167.5 536.3,167.6 538.8,168.3 539.7,168.2" fill="#48484a" fill-opacity="0.7"/>
<polygon points="575.1,176.5 569.6,177.4 570.1,177.5 575.6,176.7" fill="#48484a" fill-opacity="0.7"/><polygon points="571.5,176.5 570.6,176.7 573.8,177.5 574.7,177.4" fill="#48484a" fill-opacity="0.7"/>
<polygon points="620.5,188.3 614.7,189.4 615.4,189.6 621.2,188.5" fill="#48484a" fill-opacity="0.7"/><polygon points="616.4,188.3 615.4,188.5 619.6,189.6 620.6,189.4" fill="#48484a" fill-opacity="0.7"/>
<polygon points="682.5,204.4 676.5,206.0 677.5,206.2 683.5,204.7" fill="#48484a" fill-opacity="0.7"/><polygon points="677.5,204.4 676.5,204.7 682.5,206.2 683.5,206.0" fill="#48484a" fill-opacity="0.7"/>
<polygon points="772.0,227.6 766.3,230.0 767.8,230.4 773.5,228.0" fill="#48484a" fill-opacity="0.7"/><polygon points="766.0,227.6 765.0,228.0 774.0,230.4 774.9,230.0" fill="#48484a" fill-opacity="0.7"/>
<polygon points="912.8,264.2 908.8,268.1 911.3,268.8 915.3,264.8" fill="#48484a" fill-opacity="0.7"/><polygon points="905.0,264.2 904.3,264.8 919.3,268.8 919.9,268.1" fill="#48484a" fill-opacity="0.7"/>
<polygon points="414.6,154.6 409.4,155.1 409.6,155.1 414.8,154.7" fill="#48484a" fill-opacity="0.7"/><polygon points="412.0,154.6 411.2,154.7 412.2,155.1 413.1,155.1" fill="#48484a" fill-opacity="0.7"/>
<polygon points="428.8,160.4 423.1,160.9 423.4,161.0 429.0,160.5" fill="#48484a" fill-opacity="0.7"/><polygon points="425.9,160.4 425.0,160.5 426.2,161.0 427.2,160.9" fill="#48484a" fill-opacity="0.7"/>
<polygon points="446.3,167.5 440.1,168.2 440.4,168.3 446.5,167.6" fill="#48484a" fill-opacity="0.7"/><polygon points="443.1,167.5 442.0,167.6 443.6,168.3 444.6,168.2" fill="#48484a" fill-opacity="0.7"/>
<polygon points="468.4,176.5 461.7,177.4 462.0,177.5 468.7,176.7" fill="#48484a" fill-opacity="0.7"/><polygon points="464.8,176.5 463.7,176.7 465.7,177.5 466.8,177.4" fill="#48484a" fill-opacity="0.7"/>
<polygon points="497.4,188.3 490.0,189.4 490.4,189.6 497.8,188.5" fill="#48484a" fill-opacity="0.7"/><polygon points="493.2,188.3 492.0,188.5 494.7,189.6 495.9,189.4" fill="#48484a" fill-opacity="0.7"/>
<polygon points="536.9,204.4 528.8,206.0 529.4,206.2 537.5,204.7" fill="#48484a" fill-opacity="0.7"/><polygon points="532.0,204.4 530.6,204.7 534.4,206.2 535.8,206.0" fill="#48484a" fill-opacity="0.7"/>
<polygon points="594.0,227.6 585.1,230.0 586.0,230.4 595.0,228.0" fill="#48484a" fill-opacity="0.7"/><polygon points="588.0,227.6 586.5,228.0 592.2,230.4 593.7,230.0" fill="#48484a" fill-opacity="0.7"/>
<polygon points="683.9,264.2 674.4,268.1 676.0,268.8 685.5,264.8" fill="#48484a" fill-opacity="0.7"/><polygon points="676.1,264.2 674.5,264.8 684.0,268.8 685.6,268.1" fill="#48484a" fill-opacity="0.7"/>
<polygon points="845.8,330.0 837.9,337.8 841.1,339.1 848.9,331.3" fill="#48484a" fill-opacity="0.7"/><polygon points="835.0,330.0 833.6,331.3 852.3,339.1 853.6,337.8" fill="#48484a" fill-opacity="0.7"/>
<polygon points="344.5,160.4 338.2,160.9 338.3,161.0 344.6,160.5" fill="#48484a" fill-opacity="0.7"/><polygon points="341.7,160.4 340.6,160.5 341.2,161.0 342.2,160.9" fill="#48484a" fill-opacity="0.7"/>
<polygon points="352.1,167.5 345.1,168.2 345.2,168.3 352.2,167.6" fill="#48484a" fill-opacity="0.7"/><polygon points="348.9,167.5 347.8,167.6 348.4,168.3 349.6,168.2" fill="#48484a" fill-opacity="0.7"/>
<polygon points="361.7,176.5 353.8,177.4 354.0,177.5 361.9,176.7" fill="#48484a" fill-opacity="0.7"/><polygon points="358.1,176.5 356.8,176.7 357.6,177.5 359.0,177.4" fill="#48484a" fill-opacity="0.7"/>
<polygon points="374.2,188.3 365.3,189.4 365.5,189.6 374.4,188.5" fill="#48484a" fill-opacity="0.7"/><polygon points="370.1,188.3 368.6,188.5 369.7,189.6 371.2,189.4" fill="#48484a" fill-opacity="0.7"/>
<polygon points="391.4,204.4 381.0,206.0 381.3,206.2 391.6,204.7" fill="#48484a" fill-opacity="0.7"/><polygon points="386.4,204.4 384.7,204.7 386.3,206.2 388.0,206.0" fill="#48484a" fill-opacity="0.7"/>
<polygon points="416.1,227.6 403.9,230.0 404.2,230.4 416.5,228.0" fill="#48484a" fill-opacity="0.7"/><polygon points="410.1,227.6 408.0,228.0 410.4,230.4 412.5,230.0" fill="#48484a" fill-opacity="0.7"/>
<polygon points="455.0,264.2 440.1,268.1 440.7,268.8 455.7,264.8" fill="#48484a" fill-opacity="0.7"/><polygon points="447.2,264.2 444.7,264.8 448.7,268.8 451.2,268.1" fill="#48484a" fill-opacity="0.7"/>
<polygon points="525.0,330.0 506.4,337.8 507.7,339.1 526.4,331.3" fill="#48484a" fill-opacity="0.7"/><polygon points="514.2,330.0 511.1,331.3 518.9,339.1 522.1,337.8" fill="#48484a" fill-opacity="0.7"/>
</g>
</g>
</svg>

<div style="left:486px;top:124px;width:1467px;height:743px;overflow:hidden">
<div style="left:0;top:0;width:0;height:0;transform-origin:0 0;transform:matrix3d(-1.8510158,-0.070480874,0,-0.0012780718,-0.020578542,-0.070480874,0,-0.0012780718,0,0,1,0,732.19454,475.24828,0,1)">
<div style="left:0;top:0;width:0;height:0;transform-origin:0 0;transform:translate(27.0px,25.0px) scale(1,-1)"><div style="left:0;top:-92.3px;font-size:109.0px;line-height:109.0px;height:109.0px;font-weight:bold;color:#3a3a3d;opacity:0.17;letter-spacing:-2px;-webkit-text-stroke:0">udon</div></div>
<div style="left:0;top:0;width:0;height:0;transform-origin:0 0;transform:translate(-50.0px,-66.0px) scale(-1,1)"><div style="left:-12.0px;top:-58.0px;width:272.0px;height:74.0px;border:3.5px solid #3a3a3d;border-radius:11.0px;opacity:0.28"></div><div style="left:0;top:-52.5px;font-size:62.0px;line-height:62.0px;height:62.0px;font-weight:bold;font-style:italic;color:#3a3a3d;opacity:0.26">VRCHAT</div></div>
<div style="left:0;top:0;width:0;height:0;transform-origin:0 0;transform:translate(27.0px,-1255.0px) scale(1,-1)"><div style="left:0;top:-92.3px;font-size:109.0px;line-height:109.0px;height:109.0px;font-weight:bold;color:#3a3a3d;opacity:0.13;letter-spacing:-2px;-webkit-text-stroke:0">udon</div></div>
<div style="left:0;top:0;width:0;height:0;transform-origin:0 0;transform:translate(-50.0px,-1346.0px) scale(-1,1)"><div style="left:-12.0px;top:-58.0px;width:272.0px;height:74.0px;border:3.5px solid #3a3a3d;border-radius:11.0px;opacity:0.28"></div><div style="left:0;top:-52.5px;font-size:62.0px;line-height:62.0px;height:62.0px;font-weight:bold;font-style:italic;color:#3a3a3d;opacity:0.20">VRCHAT</div></div>
<div style="left:0;top:0;width:0;height:0;transform-origin:0 0;transform:translate(-1253.0px,25.0px) scale(1,-1)"><div style="left:0;top:-92.3px;font-size:109.0px;line-height:109.0px;height:109.0px;font-weight:bold;color:#3a3a3d;opacity:0.13;letter-spacing:-2px;-webkit-text-stroke:0">udon</div></div>
<div style="left:0;top:0;width:0;height:0;transform-origin:0 0;transform:translate(-1330.0px,-66.0px) scale(-1,1)"><div style="left:-12.0px;top:-58.0px;width:272.0px;height:74.0px;border:3.5px solid #3a3a3d;border-radius:11.0px;opacity:0.28"></div><div style="left:0;top:-52.5px;font-size:62.0px;line-height:62.0px;height:62.0px;font-weight:bold;font-style:italic;color:#3a3a3d;opacity:0.20">VRCHAT</div></div>
<div style="left:0;top:0;width:0;height:0;transform-origin:0 0;transform:translate(-1253.0px,-1255.0px) scale(1,-1)"><div style="left:0;top:-92.3px;font-size:109.0px;line-height:109.0px;height:109.0px;font-weight:bold;color:#3a3a3d;opacity:0.13;letter-spacing:-2px;-webkit-text-stroke:0">udon</div></div>
<div style="left:0;top:0;width:0;height:0;transform-origin:0 0;transform:translate(-1330.0px,-1346.0px) scale(-1,1)"><div style="left:-12.0px;top:-58.0px;width:272.0px;height:74.0px;border:3.5px solid #3a3a3d;border-radius:11.0px;opacity:0.28"></div><div style="left:0;top:-52.5px;font-size:62.0px;line-height:62.0px;height:62.0px;font-weight:bold;font-style:italic;color:#3a3a3d;opacity:0.20">VRCHAT</div></div>
<div style="left:0;top:0;width:0;height:0;transform-origin:0 0;transform:translate(130.0px,112.0px) scale(1,-1)"><div style="left:0;top:-10.6px;font-size:12.5px;line-height:12.5px;height:12.5px;color:#e0e0e0;opacity:0.22;-webkit-text-stroke:0">Powered by</div></div>
<div style="left:0;top:0;width:0;height:0;transform-origin:0 0;transform:translate(20.0px,104.0px) scale(1,-1)"><div style="left:-5.0px;top:-17.0px;width:68.0px;height:21.0px;border:2.0px solid #3a3a3d;border-radius:4.0px;opacity:0.28"></div><div style="left:0;top:-14.0px;font-size:16.5px;line-height:16.5px;height:16.5px;font-weight:bold;font-style:italic;color:#3a3a3d;opacity:0.34">VRCHAT</div></div>
</div></div>

<svg style="left:486px;top:125px;width:1467px;height:742px" viewBox="271.29 69.78 818.88 414.19" preserveAspectRatio="none">
<g clip-path="url(#flc)">
<ellipse cx="573.5" cy="346.5" rx="48" ry="22.5" transform="rotate(-7 573.5 346.5)" fill="#2b2b2e"/>
<ellipse cx="627.6" cy="339.3" rx="6.2" ry="3.1" transform="rotate(-20 627.6 339.3)" fill="#2b2b2e"/>
<path d="M619 341.5 L623 338.5 L623 342Z" fill="#2b2b2e"/>
<g mask="url(#gm)" stroke="#ffffff" stroke-opacity="0.34" stroke-width="0.55" fill="none">
<path d="M639.1 118.8L1098.0 142.7M634.6 118.9L1098.0 143.7M629.9 119.1L1098.0 144.8M625.2 119.3L1098.0 145.9M620.4 119.6L1098.0 147.0M615.4 119.8L1098.0 148.2M610.3 120.0L1098.0 149.5M605.2 120.2L1098.0 150.8M599.9 120.4L1098.0 152.3M594.5 120.7L1098.0 153.8M589.0 120.9L1098.0 155.3M583.3 121.1L1098.0 157.0M577.5 121.4L1098.0 158.8M571.6 121.6L1098.0 160.7M565.6 121.9L1098.0 162.7M559.3 122.2L1098.0 164.9M553.0 122.4L1098.0 167.2M546.5 122.7L1098.0 169.7M539.8 123.0L1098.0 172.4M532.9 123.3L1098.0 175.3M525.9 123.6L1098.0 178.5M518.7 123.9L1098.0 181.9M511.3 124.2L1098.0 185.6M503.7 124.5L1098.0 189.7M495.9 124.9L1098.0 194.3M487.9 125.2L1098.0 199.2M479.6 125.5L1098.0 204.8M471.2 125.9L1098.0 211.0M462.5 126.3L1098.0 217.9M453.5 126.7L1098.0 225.9M444.3 127.1L1098.0 234.9M434.7 127.5L1098.0 245.3M425.0 127.9L1098.0 257.5M414.8 128.3L1098.0 272.0M404.4 128.7L1098.0 289.3M393.7 129.2L1098.0 310.6M382.6 129.7L1098.0 337.2M371.1 130.2L1098.0 371.5M359.3 130.7L1098.0 417.4M347.0 131.2L1098.0 482.1M334.4 131.7L948.5 492.0M321.2 132.3L777.7 492.0M307.7 132.9L606.9 492.0M293.6 133.5L436.1 492.0M279.0 134.1L265.3 492.0M263.8 134.7L262.0 138.6M720.9 118.8L262.0 142.7M725.4 118.9L262.0 143.7M730.1 119.1L262.0 144.8M734.8 119.3L262.0 145.9M739.6 119.6L262.0 147.0M744.6 119.8L262.0 148.2M749.7 120.0L262.0 149.5M754.8 120.2L262.0 150.8M760.1 120.4L262.0 152.3M765.5 120.7L262.0 153.8M771.0 120.9L262.0 155.3M776.7 121.1L262.0 157.0M782.5 121.4L262.0 158.8M788.4 121.6L262.0 160.7M794.4 121.9L262.0 162.7M800.7 122.2L262.0 164.9M807.0 122.4L262.0 167.2M813.5 122.7L262.0 169.7M820.2 123.0L262.0 172.4M827.1 123.3L262.0 175.3M834.1 123.6L262.0 178.5M841.3 123.9L262.0 181.9M848.7 124.2L262.0 185.6M856.3 124.5L262.0 189.7M864.1 124.9L262.0 194.3M872.1 125.2L262.0 199.2M880.4 125.5L262.0 204.8M888.8 125.9L262.0 211.0M897.5 126.3L262.0 217.9M906.5 126.7L262.0 225.9M915.7 127.1L262.0 234.9M925.3 127.5L262.0 245.3M935.0 127.9L262.0 257.5M945.2 128.3L262.0 272.0M955.6 128.7L262.0 289.3M966.3 129.2L262.0 310.6M977.4 129.7L262.0 337.2M988.9 130.2L262.0 371.5M1000.7 130.7L262.0 417.4M1013.0 131.2L262.0 482.1M1025.6 131.7L411.5 492.0M1038.8 132.3L582.3 492.0M1052.3 132.9L753.1 492.0M1066.4 133.5L923.9 492.0M1081.0 134.1L1094.7 492.0M1096.2 134.7L1098.0 138.6"/>
</g>
</g>
<g fill="#ffffff"><g id="cam1"><circle cx="653.8" cy="230.4" r="9.7"/><circle cx="680" cy="218.1" r="12.8"/><rect x="658.4" y="222" width="40.6" height="32.2" rx="3"/><path d="M697.5 240.5 L709.6 232 Q713.3 231 713.3 233.8 V247 Q713.3 249.8 709.6 248.8 L697.5 240.7Z"/></g></g>
<circle cx="679.1" cy="184.8" r="44.3" fill="url(#sph)"/>
<circle cx="679.1" cy="184.8" r="44.3" fill="url(#sph2)"/>
<circle cx="679.1" cy="184.8" r="44" fill="none" stroke="#c8c8c8" stroke-opacity="0.5" stroke-width="0.8"/>
<g clip-path="url(#sphc)" fill="#a4a4a4"><g id="cam2"><circle cx="653.8" cy="230.4" r="9.7"/><circle cx="680" cy="218.1" r="12.8"/><rect x="658.4" y="222" width="40.6" height="32.2" rx="3"/><path d="M697.5 240.5 L709.6 232 Q713.3 231 713.3 233.8 V247 Q713.3 249.8 709.6 248.8 L697.5 240.7Z"/></g></g>
<g transform="translate(678.9,268.5) scale(1.68)"><path d="M0 -4.3 L3.9 -2.2 V2.3 L0 4.5 L-3.9 2.3 V-2.2Z" fill="#e8e8e8" stroke="#f26a1c" stroke-width="1.1" stroke-linejoin="round"/><path d="M0 -4.3 L3.9 -2.2 L0 0 L-3.9 -2.2Z" fill="#fafafa"/><path d="M-3.9 -2.2 L0 0 V4.5 L-3.9 2.3Z" fill="#7a7a7a"/><path d="M0 0 L3.9 -2.2 V2.3 L0 4.5Z" fill="#d8d8d8"/><path d="M0 -4.3 L3.9 -2.2 V2.3 L0 4.5 L-3.9 2.3 V-2.2Z" fill="none" stroke="#f26a1c" stroke-width="1.1" stroke-linejoin="round"/></g>
</svg>
<div style="left:488.5px;top:127.5px;width:37px;height:169.5px;background:#0e0e0e;border-radius:4px"></div>
<div style="left:491.0px;top:130.0px;width:32px;height:14px;background:#1f2a44;border-radius:2px 2px 0 0"></div>
<div style="left:499.0px;top:133.5px;width:16px;height:5px;background:#4a5270;border-radius:1px"></div>
<div style="left:491.0px;top:146.0px;width:32px;height:20px;background:#46607c"></div>
<svg style="left:499.0px;top:148.0px;width:16px;height:16px" viewBox="0 0 16 16"><g transform="translate(-1,-1) scale(1.12)"><path d="M8.6 10.5 L4.6 4.6 M8.6 10.5 L6.9 2.6 M8.6 10.5 L9.6 2.4 M8.6 10.5 L12.2 3.8 M8 11.5 L2.6 8.2" stroke="#f4f4f4" stroke-width="1.9" stroke-linecap="round" fill="none"/><path d="M4.6 8.6 Q8.6 5.6 12.4 7.4 Q12.8 14.8 8.6 14.8 Q5.6 14.8 4.6 11.4Z" fill="#f4f4f4"/></g></svg>
<div style="left:491.0px;top:167.0px;width:32px;height:20px;background:#4b4b4b"></div>
<svg style="left:499.0px;top:169.0px;width:16px;height:16px" viewBox="0 0 16 16"><path d="M8 0.6 L10.6 3.8 H5.4Z M8 15.4 L10.6 12.2 H5.4Z M0.6 8 L3.8 5.4 V10.6Z M15.4 8 L12.2 5.4 V10.6Z" fill="#c8c8c8"/><path d="M8 3.6 V6.6 M8 9.4 V12.4 M3.6 8 H6.6 M9.4 8 H12.4" stroke="#c8c8c8" stroke-width="1.5"/></svg>
<div style="left:491.0px;top:188.0px;width:32px;height:20px;background:#4b4b4b"></div>
<svg style="left:499.0px;top:190.0px;width:16px;height:16px" viewBox="0 0 16 16"><path d="M2.6 9.6 A5.6 5.6 0 0 1 11.6 3.6" fill="none" stroke="#c8c8c8" stroke-width="1.5"/><path d="M13.4 6.4 A5.6 5.6 0 0 1 4.4 12.4" fill="none" stroke="#c8c8c8" stroke-width="1.5"/><path d="M9.4 1 L13.4 3.2 L10.4 6.2Z M6.6 15 L2.6 12.8 L5.6 9.8Z" fill="#c8c8c8"/></svg>
<div style="left:491.0px;top:209.0px;width:32px;height:20px;background:#4b4b4b"></div>
<svg style="left:499.0px;top:211.0px;width:16px;height:16px" viewBox="0 0 16 16"><rect x="1.8" y="1.8" width="12.4" height="12.4" fill="none" stroke="#c8c8c8" stroke-width="1.5"/><rect x="3.4" y="8.6" width="4" height="4" fill="#c8c8c8"/><path d="M7.6 8.4 L12 4 M8.8 3.8 H12.2 V7.2" fill="none" stroke="#c8c8c8" stroke-width="1.4"/></svg>
<div style="left:491.0px;top:230.0px;width:32px;height:20px;background:#4b4b4b"></div>
<svg style="left:499.0px;top:232.0px;width:16px;height:16px" viewBox="0 0 16 16"><path d="M2.5 2.5 H13.5 V13.5 H2.5Z" fill="none" stroke="#c8c8c8" stroke-width="1.3" stroke-dasharray="1.8 1.4"/><rect x="0.8" y="0.8" width="3.4" height="3.4" fill="#c8c8c8"/><rect x="11.8" y="0.8" width="3.4" height="3.4" fill="#c8c8c8"/><rect x="0.8" y="11.8" width="3.4" height="3.4" fill="#c8c8c8"/><rect x="11.8" y="11.8" width="3.4" height="3.4" fill="#c8c8c8"/></svg>
<div style="left:491.0px;top:251.0px;width:32px;height:20px;background:#4b4b4b"></div>
<svg style="left:499.0px;top:253.0px;width:16px;height:16px" viewBox="0 0 16 16"><circle cx="7.5" cy="8.8" r="5" fill="none" stroke="#c8c8c8" stroke-width="1.3"/><ellipse cx="7.5" cy="8.8" rx="2.2" ry="5" fill="none" stroke="#c8c8c8" stroke-width="1.1"/><path d="M2.5 8.8 H12.5" stroke="#c8c8c8" stroke-width="1.1"/><path d="M2 14.6 L14.4 1.6 M11.6 1.2 H14.8 V4.4" fill="none" stroke="#c8c8c8" stroke-width="1.1" stroke-dasharray="1.6 1"/></svg>
<div style="left:491.0px;top:275.5px;width:32px;height:20px;background:#4b4b4b;border-radius:0 0 2px 2px"></div>
<svg style="left:497.5px;top:278.0px;width:19px;height:15px" viewBox="0 0 19 15"><path d="M3.5 12 Q5 4 9.5 3.5 Q14 4 15.5 12" fill="none" stroke="#d0d0d0" stroke-width="1.5"/><circle cx="9.5" cy="3.4" r="2.1" fill="#d0d0d0"/><circle cx="3.4" cy="12" r="1.9" fill="#d0d0d0"/><circle cx="15.6" cy="12" r="1.9" fill="#d0d0d0"/></svg>
<svg style="left:1838px;top:128px;width:112px;height:110px" viewBox="1025.98 71.45 62.52 61.40">
<rect x="1030.6" y="74.7" width="8.4" height="2" fill="#5a6fae" opacity="0.85"/>
<g font-family="Liberation Sans, sans-serif" font-size="7.8" fill="#f6f6f6" text-anchor="middle" font-weight="bold"><text x="1058.5" y="80.6">y</text><text x="1040.4" y="108.6">x</text><text x="1076.7" y="108.6">z</text></g>
<path d="M1059.3 100 L1051.6 94.6 M1059.3 100 L1067 94.6 M1059.3 100 V109.6" stroke="#dedede" stroke-width="2.2" stroke-linecap="round"/>
<circle cx="1051.2" cy="95.2" r="2.3" fill="#e4e4e4"/><circle cx="1067.4" cy="95.2" r="2.3" fill="#e4e4e4"/><ellipse cx="1059.3" cy="109.8" rx="1.9" ry="2.5" fill="#e0e0e0"/>
<path d="M1059.3 94.6 L1055.5 83.7 H1063.1Z" fill="#96d840"/><ellipse cx="1059.3" cy="83.8" rx="3.8" ry="1.1" fill="#b4ec64"/>
<path d="M1055.4 102 L1044.2 101.5 Q1043.6 105 1047.6 109.2Z" fill="#d6554a"/><path d="M1044.2 101.5 Q1043.6 105 1047.6 109.2 Q1046.4 104.6 1044.2 101.5Z" fill="#b8463e"/>
<path d="M1063.2 102 L1074.4 101.5 Q1075 105 1071 109.2Z" fill="#4b74de"/><path d="M1074.4 101.5 Q1075 105 1071 109.2 Q1072.2 104.6 1074.4 101.5Z" fill="#3c60c0"/>
<path d="M1059.3 96.2 L1062.9 98.1 V102.4 L1059.3 104.4 L1055.7 102.4 V98.1Z" fill="#dcdcdc"/><path d="M1059.3 96.2 L1062.9 98.1 L1059.3 100 L1055.7 98.1Z" fill="#ececec"/>
<rect x="1075.4" y="81.7" width="3.9" height="2.7" rx="0.4" fill="#e4e4ee"/><path d="M1076.3 81.7 V80.8 A1.1 1.1 0 0 1 1078.5 80.6" fill="none" stroke="#e4e4ee" stroke-width="0.7"/>
<path d="M1050.4 125.2 L1045.6 127.5 L1050.4 129.8" fill="none" stroke="#f0f0f0" stroke-opacity="0.75" stroke-width="0.8"/>
<text x="1053" y="129.6" font-family="Liberation Sans, sans-serif" font-size="6.6" fill="#ffffff" fill-opacity="0.16">Persp</text>
</svg>
<div style="left:1749px;top:627px;width:202px;height:238px;background:#151515;border:1.5px solid #0a0a0a;border-radius:4px;overflow:hidden">
<div style="left:3px;top:5px;width:15px;height:1.5px;background:#5a5a5a"></div><div style="left:3px;top:9px;width:15px;height:1.5px;background:#5a5a5a"></div>
<div class="t" style="left:23px;top:-0.5px;color:#9a9a9a">AI Navigation</div>
<div class="arr" style="left:6px;top:21.1px;border-top-color:#6a6a6a"></div>
<div class="t" style="left:19px;top:16.1px;color:#d0d0d0">Surfaces</div>
<div class="t" style="left:19px;top:35.1px;color:#d0d0d0">Show Only Selected</div>
<div class="cb" style="left:180px;top:36.1px;width:14px;height:14px;background:#2a2a2a;border-color:#1a1a1a"></div>
<div class="t" style="left:19px;top:51.2px;color:#d0d0d0">Show NavMesh</div>
<div class="cb on" style="left:180px;top:52.2px;width:14px;height:14px;background:#2a2a2a;border-color:#1a1a1a"></div>
<div class="t" style="left:19px;top:67.2px;color:#d0d0d0">Show HeightMesh</div>
<div class="cb" style="left:180px;top:68.2px;width:14px;height:14px;background:#2a2a2a;border-color:#1a1a1a"></div>
<div class="arr" style="left:6px;top:94.8px;border-top-color:#6a6a6a"></div>
<div class="t" style="left:19px;top:89.8px;color:#d0d0d0">Agents</div>
<div class="t" style="left:19px;top:108.6px;color:#d0d0d0">Show Path Polygons</div>
<div class="cb on" style="left:180px;top:109.6px;width:14px;height:14px;background:#2a2a2a;border-color:#1a1a1a"></div>
<div class="t" style="left:19px;top:124.6px;color:#d0d0d0">Show Path Query Nodes</div>
<div class="cb" style="left:180px;top:125.6px;width:14px;height:14px;background:#2a2a2a;border-color:#1a1a1a"></div>
<div class="t" style="left:19px;top:140.6px;color:#d0d0d0">Show Neighbours</div>
<div class="cb" style="left:180px;top:141.6px;width:14px;height:14px;background:#2a2a2a;border-color:#1a1a1a"></div>
<div class="t" style="left:19px;top:156.6px;color:#d0d0d0">Show Walls</div>
<div class="cb" style="left:180px;top:157.6px;width:14px;height:14px;background:#2a2a2a;border-color:#1a1a1a"></div>
<div class="t" style="left:19px;top:172.6px;color:#d0d0d0">Show Avoidance</div>
<div class="cb" style="left:180px;top:173.6px;width:14px;height:14px;background:#2a2a2a;border-color:#1a1a1a"></div>
<div class="arr" style="left:6px;top:199.6px;border-top-color:#6a6a6a"></div>
<div class="t" style="left:19px;top:194.6px;color:#d0d0d0">Obstacles</div>
<div class="t" style="left:19px;top:213.9px;color:#d0d0d0">Show Carve Hull</div>
<div class="cb" style="left:180px;top:214.9px;width:14px;height:14px;background:#2a2a2a;border-color:#1a1a1a"></div>
</div>
<div class="panel" style="left:1956px;top:81px;width:604px;height:1329px;overflow:hidden">
<div class="tabbar" style="left:0;top:0;width:604px;height:19px"></div>
<div class="tab" style="left:0px;width:92px;border-radius:3px 3px 0 0"></div>
<svg style="left:8px;top:4px;width:12px;height:12px" viewBox="0 0 12 12"><circle cx="6" cy="6" r="5.6" fill="#c8c8c8"/><rect x="5.1" y="5" width="1.9" height="4.4" fill="#3c3c3c"/><circle cx="6" cy="3.2" r="1.1" fill="#3c3c3c"/></svg>
<div class="t" style="left:23px;top:3px;color:#d2d2d2">Inspector</div>
<svg style="left:565px;top:3px;width:10.5px;height:11.5px;margin:1px 0 0 1px" viewBox="0 0 12 13"><rect x="1" y="5.5" width="10" height="6.5" rx="1" fill="none" stroke="#c4c4c4" stroke-width="1.6"/><path d="M3.2 5.5 V3.6 a2.6 2.6 0 0 1 5.2 0" fill="none" stroke="#c4c4c4" stroke-width="1.5"/></svg>
<svg style="left:588px;top:3px;width:4px;height:14px" viewBox="0 0 4 14"><circle cx="2" cy="3" r="1.45" fill="#d0d0d0"/><circle cx="2" cy="7" r="1.45" fill="#d0d0d0"/><circle cx="2" cy="11" r="1.45" fill="#d0d0d0"/></svg>
<div style="left:0;top:19px;width:604px;height:59px;background:#3c3c3c"></div>
<svg style="left:5px;top:27px;width:26px;height:27px" viewBox="0 0 26 27"><path d="M11.5 1.5 L21.5 6.8 V18.2 L11.5 23.5 L1.5 18.2 V6.8 Z M1.8 7 L11.5 12.2 L21.2 7 M11.5 12.2 V23.5" fill="none" stroke="#d4d4d4" stroke-width="1.7" stroke-linejoin="round"/><path d="M5 11.5 L8.6 13.4 V19 L5 17.1Z M14.4 13.4 L18 11.5 V17.1 L14.4 19Z" fill="none" stroke="#d4d4d4" stroke-width="1" opacity=".55"/><path d="M18 21 H27 L22.5 26.5Z" fill="#c4c4c4"/></svg>
<div class="cb on" style="left:46px;top:31px"></div>
<div class="fld" style="left:66px;top:29px;width:457px;color:#e8e8e8;font-weight:bold;font-size:12.5px">Cube</div>
<div class="cb" style="left:525px;top:31px"></div>
<div class="t" style="left:545px;top:30px;color:#a8a8a8">Static</div>
<div style="left:588px;top:36px;border-left:4.5px solid transparent;border-right:4.5px solid transparent;border-top:5px solid #c4c4c4;width:0;height:0"></div>
<div class="t" style="left:40px;top:54px;color:#b4b4b4">Tag</div>
<div class="dd" style="left:66px;top:52px;width:244px;line-height:17.5px">Untagged</div>
<div class="t" style="left:326px;top:54px;color:#b4b4b4">Layer</div>
<div class="dd" style="left:363px;top:52px;width:235px;line-height:17.5px">Default</div>
<div class="sep" style="top:77px"></div>
<div class="hdr" style="top:78.7px"></div>
<div class="arr" style="left:5px;top:86.7px"></div>
<svg style="left:19px;top:81px;width:16px;height:16px" viewBox="0 0 16 16"><path d="M8 9 V1.5" stroke="#9be22a" stroke-width="2.2"/><path d="M8 9 L2 13.2" stroke="#3aa7f0" stroke-width="2.2"/><path d="M8 9 L14 13.2" stroke="#ee5a2c" stroke-width="2.2"/><circle cx="8" cy="9" r="1.6" fill="#e8e8e8"/></svg>
<div class="t b" style="left:59px;top:81.7px;color:#e4e4e4">Transform</div>
<svg style="left:542px;top:82px;width:14px;height:14px" viewBox="0 0 14 14"><circle cx="7" cy="7" r="6.3" fill="#c4c4c4"/><path d="M5 5.4 a2 2 0 1 1 3 1.7 q-1 .6 -1 1.6" fill="none" stroke="#3e3e3e" stroke-width="1.6"/><circle cx="7" cy="10.6" r="1" fill="#3e3e3e"/></svg>
<svg style="left:563px;top:82px;width:14px;height:14px" viewBox="0 0 14 14"><path d="M1 4.2 H13 M1 9.8 H13" stroke="#c4c4c4" stroke-width="1.5"/><path d="M8.2 1.6 V6.8 M5.2 7.2 V12.4" stroke="#c4c4c4" stroke-width="2.2"/></svg>
<svg style="left:588px;top:82px;width:4px;height:14px" viewBox="0 0 4 14"><circle cx="2" cy="3" r="1.45" fill="#d0d0d0"/><circle cx="2" cy="7" r="1.45" fill="#d0d0d0"/><circle cx="2" cy="11" r="1.45" fill="#d0d0d0"/></svg>
<div class="t" style="left:18px;top:105.8px">Position</div>
<div class="t" style="left:252.8px;top:105.8px">X</div>
<div class="fld" style="left:266.5px;top:104.8px;width:96.5px">0</div>
<div class="t" style="left:370.4px;top:105.8px">Y</div>
<div class="fld" style="left:384.1px;top:104.8px;width:96.5px">1</div>
<div class="t" style="left:488.0px;top:105.8px">Z</div>
<div class="fld" style="left:501.7px;top:104.8px;width:96.5px">0</div>
<div class="t" style="left:18px;top:125.8px">Rotation</div>
<div class="t" style="left:252.8px;top:125.8px">X</div>
<div class="fld" style="left:266.5px;top:124.8px;width:96.5px">0</div>
<div class="t" style="left:370.4px;top:125.8px">Y</div>
<div class="fld" style="left:384.1px;top:124.8px;width:96.5px">0</div>
<div class="t" style="left:488.0px;top:125.8px">Z</div>
<div class="fld" style="left:501.7px;top:124.8px;width:96.5px">0</div>
<div class="t" style="left:18px;top:145.8px">Scale</div>
<div class="t" style="left:252.8px;top:145.8px">X</div>
<div class="fld" style="left:266.5px;top:144.8px;width:96.5px">0.1</div>
<div class="t" style="left:370.4px;top:145.8px">Y</div>
<div class="fld" style="left:384.1px;top:144.8px;width:96.5px">0.1</div>
<div class="t" style="left:488.0px;top:145.8px">Z</div>
<div class="fld" style="left:501.7px;top:144.8px;width:96.5px">0.1</div>
<svg style="left:231px;top:147.8px;width:16px;height:12px" viewBox="0 0 16 12"><path d="M6.5 3 H4.5 a3 3 0 0 0 0 6 H6.5 M9.5 3 H11.5 a3 3 0 0 1 0 6 H9.5 M5.5 6 H10.5" fill="none" stroke="#c4c4c4" stroke-width="1.4"/><path d="M3 0.8 L13 11.2" stroke="#c4c4c4" stroke-width="1.3"/></svg>
<div class="hdr" style="top:171.9px"></div>
<div class="arr" style="left:5px;top:179.9px"></div>
<svg style="left:19px;top:174px;width:16px;height:16px" viewBox="0 0 16 16"><rect x="1" y="1" width="14" height="14" rx="1" fill="#1d4e6e" stroke="#7fd6fd" stroke-width="1.5"/><path d="M1 5.7 H15 M1 10.3 H15 M5.7 1 V15 M10.3 1 V15" stroke="#7fd6fd" stroke-width="1.4"/></svg>
<div class="t b" style="left:59px;top:174.9px;color:#e4e4e4">Cube (Mesh Filter)</div>
<svg style="left:542px;top:175px;width:14px;height:14px" viewBox="0 0 14 14"><circle cx="7" cy="7" r="6.3" fill="#c4c4c4"/><path d="M5 5.4 a2 2 0 1 1 3 1.7 q-1 .6 -1 1.6" fill="none" stroke="#3e3e3e" stroke-width="1.6"/><circle cx="7" cy="10.6" r="1" fill="#3e3e3e"/></svg>
<svg style="left:563px;top:175px;width:14px;height:14px" viewBox="0 0 14 14"><path d="M1 4.2 H13 M1 9.8 H13" stroke="#c4c4c4" stroke-width="1.5"/><path d="M8.2 1.6 V6.8 M5.2 7.2 V12.4" stroke="#c4c4c4" stroke-width="2.2"/></svg>
<svg style="left:588px;top:175px;width:4px;height:14px" viewBox="0 0 4 14"><circle cx="2" cy="3" r="1.45" fill="#d0d0d0"/><circle cx="2" cy="7" r="1.45" fill="#d0d0d0"/><circle cx="2" cy="11" r="1.45" fill="#d0d0d0"/></svg>
<div class="t" style="left:18px;top:197.6px">Mesh</div>
<div class="fld" style="left:251px;top:196.6px;width:347px;padding-left:17px">Cube</div>
<svg style="left:254px;top:199.6px;width:12px;height:12px" viewBox="0 0 12 12"><rect x="0.5" y="0.5" width="11" height="11" fill="#3f6a8c"/><path d="M0.5 4 H11.5 M0.5 8 H11.5 M4 0.5 V11.5 M8 0.5 V11.5" stroke="#2c4f6c" stroke-width="1"/></svg>
<svg style="left:581px;top:198px;width:14px;height:14px" viewBox="0 0 14 14"><circle cx="7" cy="7" r="5.2" fill="none" stroke="#c4c4c4" stroke-width="1.3"/><circle cx="7" cy="7" r="1.8" fill="#c4c4c4"/></svg>
<div class="hdr" style="top:222.9px"></div>
<div class="arr" style="left:5px;top:230.9px"></div>
<svg style="left:19px;top:225px;width:16px;height:16px" viewBox="0 0 16 16"><rect x="1" y="1" width="14" height="11" rx="1" fill="#1d4e6e" stroke="#7fd6fd" stroke-width="1.5"/><path d="M1 6.5 H15 M5.7 1 V12 M10.3 1 V12" stroke="#7fd6fd" stroke-width="1.4"/><ellipse cx="9" cy="12" rx="5" ry="3" fill="#3e3e3e" stroke="#e0e0e0" stroke-width="1.2"/><circle cx="9" cy="12" r="1.4" fill="#e0e0e0"/></svg>
<div class="cb on" style="left:39px;top:227.4px;width:13px;height:13px;background:#2a2a2a"></div>
<div class="t b" style="left:59px;top:225.9px;color:#e4e4e4">Mesh Renderer</div>
<svg style="left:542px;top:226px;width:14px;height:14px" viewBox="0 0 14 14"><circle cx="7" cy="7" r="6.3" fill="#c4c4c4"/><path d="M5 5.4 a2 2 0 1 1 3 1.7 q-1 .6 -1 1.6" fill="none" stroke="#3e3e3e" stroke-width="1.6"/><circle cx="7" cy="10.6" r="1" fill="#3e3e3e"/></svg>
<svg style="left:563px;top:226px;width:14px;height:14px" viewBox="0 0 14 14"><path d="M1 4.2 H13 M1 9.8 H13" stroke="#c4c4c4" stroke-width="1.5"/><path d="M8.2 1.6 V6.8 M5.2 7.2 V12.4" stroke="#c4c4c4" stroke-width="2.2"/></svg>
<svg style="left:588px;top:226px;width:4px;height:14px" viewBox="0 0 4 14"><circle cx="2" cy="3" r="1.45" fill="#d0d0d0"/><circle cx="2" cy="7" r="1.45" fill="#d0d0d0"/><circle cx="2" cy="11" r="1.45" fill="#d0d0d0"/></svg>
<div class="arr r" style="left:6px;top:254.1px"></div>
<div class="t b" style="left:18px;top:250.1px;color:#d6d6d6">Materials</div>
<div class="fld" style="left:551px;top:249.1px;width:47px">1</div>
<div class="arr" style="left:5px;top:275.1px"></div>
<div class="t b" style="left:18px;top:270.1px;color:#d6d6d6">Lighting</div>
<div class="t" style="left:33px;top:290.1px">Cast Shadows</div>
<div class="dd" style="left:251px;top:289.1px;width:347px">On</div>
<div class="t" style="left:33px;top:310.0px">Receive Shadows</div>
<div class="cb on" style="left:251px;top:311.0px"></div>
<div class="t" style="left:33px;top:330.0px">Contribute Global Illumination</div>
<div class="cb" style="left:251px;top:331.0px"></div>
<div class="t dim" style="left:33px;top:350.0px">Receive Global Illumination</div>
<div class="dd dis" style="left:251px;top:349.0px;width:347px">Light Probes</div>
<div class="arr" style="left:5px;top:375.0px"></div>
<div class="t b" style="left:18px;top:370.0px;color:#d6d6d6">Probes</div>
<div class="t" style="left:33px;top:389.9px">Light Probes</div>
<div class="dd" style="left:251px;top:388.9px;width:347px">Blend Probes</div>
<div class="t" style="left:33px;top:409.9px">Reflection Probes</div>
<div class="dd" style="left:251px;top:408.9px;width:347px">Blend Probes</div>
<div class="t" style="left:33px;top:429.9px">Anchor Override</div>
<div class="fld" style="left:251px;top:428.9px;width:347px;padding-left:3px">None (Transform)</div>
<svg style="left:581px;top:430px;width:14px;height:14px" viewBox="0 0 14 14"><circle cx="7" cy="7" r="5.2" fill="none" stroke="#c4c4c4" stroke-width="1.3"/><circle cx="7" cy="7" r="1.8" fill="#c4c4c4"/></svg>
<div class="arr" style="left:5px;top:454.9px"></div>
<div class="t b" style="left:18px;top:449.9px;color:#d6d6d6">Additional Settings</div>
<div class="t" style="left:33px;top:469.8px">Motion Vectors</div>
<div class="dd" style="left:251px;top:468.8px;width:347px">Per Object Motion</div>
<div class="t" style="left:33px;top:489.8px">Dynamic Occlusion</div>
<div class="cb on" style="left:251px;top:490.8px"></div>
<div class="hdr" style="top:515.8px"></div>
<div class="arr" style="left:5px;top:523.8px"></div>
<svg style="left:19px;top:518px;width:16px;height:16px" viewBox="0 0 16 16"><path d="M8 0.8 L14.8 4.4 V11.6 L8 15.2 L1.2 11.6 V4.4Z" fill="#8fdc2c"/><path d="M8 0.8 L14.8 4.4 L8 8 L1.2 4.4Z" fill="#c6f56a"/><path d="M8 8 V15.2 L1.2 11.6 V4.4Z" fill="#9be22a"/><path d="M8 8 V15.2 L14.8 11.6 V4.4Z" fill="#6fb41c"/></svg>
<div class="cb on" style="left:39px;top:520.3px;width:13px;height:13px;background:#2a2a2a"></div>
<div class="t b" style="left:59px;top:518.8px;color:#e4e4e4">Box Collider</div>
<svg style="left:542px;top:519px;width:14px;height:14px" viewBox="0 0 14 14"><circle cx="7" cy="7" r="6.3" fill="#c4c4c4"/><path d="M5 5.4 a2 2 0 1 1 3 1.7 q-1 .6 -1 1.6" fill="none" stroke="#3e3e3e" stroke-width="1.6"/><circle cx="7" cy="10.6" r="1" fill="#3e3e3e"/></svg>
<svg style="left:563px;top:519px;width:14px;height:14px" viewBox="0 0 14 14"><path d="M1 4.2 H13 M1 9.8 H13" stroke="#c4c4c4" stroke-width="1.5"/><path d="M8.2 1.6 V6.8 M5.2 7.2 V12.4" stroke="#c4c4c4" stroke-width="2.2"/></svg>
<svg style="left:588px;top:519px;width:4px;height:14px" viewBox="0 0 4 14"><circle cx="2" cy="3" r="1.45" fill="#d0d0d0"/><circle cx="2" cy="7" r="1.45" fill="#d0d0d0"/><circle cx="2" cy="11" r="1.45" fill="#d0d0d0"/></svg>
<div class="t" style="left:18px;top:542.7px">Edit Collider</div>
<div style="left:251px;top:542.8px;width:33px;height:23px;background:#3a3a3a;border:1px solid #242424;border-radius:3px"></div>
<svg style="left:258px;top:546.7px;width:19px;height:15px" viewBox="0 0 19 15"><path d="M3.5 12 Q5 4 9.5 3.5 Q14 4 15.5 12" fill="none" stroke="#d0d0d0" stroke-width="1.6"/><circle cx="9.5" cy="3.4" r="2.2" fill="#d0d0d0"/><circle cx="3.4" cy="12" r="2" fill="#d0d0d0"/><circle cx="15.6" cy="12" r="2" fill="#d0d0d0"/></svg>
<div class="t" style="left:18px;top:571.7px">Is Trigger</div>
<div class="cb" style="left:251px;top:572.7px"></div>
<div class="t" style="left:18px;top:591.7px">Provides Contacts</div>
<div class="cb" style="left:251px;top:592.7px"></div>
<div class="t" style="left:18px;top:611.6px">Material</div>
<div class="fld" style="left:251px;top:610.6px;width:347px;padding-left:3px">None (Physic Material)</div>
<svg style="left:581px;top:612px;width:14px;height:14px" viewBox="0 0 14 14"><circle cx="7" cy="7" r="5.2" fill="none" stroke="#c4c4c4" stroke-width="1.3"/><circle cx="7" cy="7" r="1.8" fill="#c4c4c4"/></svg>
<div class="t" style="left:18px;top:631.6px">Center</div>
<div class="t" style="left:252.8px;top:631.6px">X</div>
<div class="fld" style="left:266.5px;top:630.6px;width:96.5px">0</div>
<div class="t" style="left:370.4px;top:631.6px">Y</div>
<div class="fld" style="left:384.1px;top:630.6px;width:96.5px">0</div>
<div class="t" style="left:488.0px;top:631.6px">Z</div>
<div class="fld" style="left:501.7px;top:630.6px;width:96.5px">0</div>
<div class="t" style="left:18px;top:651.6px">Size</div>
<div class="t" style="left:252.8px;top:651.6px">X</div>
<div class="fld" style="left:266.5px;top:650.6px;width:96.5px">1</div>
<div class="t" style="left:370.4px;top:651.6px">Y</div>
<div class="fld" style="left:384.1px;top:650.6px;width:96.5px">1</div>
<div class="t" style="left:488.0px;top:651.6px">Z</div>
<div class="fld" style="left:501.7px;top:650.6px;width:96.5px">1</div>
<div class="arr r" style="left:6px;top:675.7px"></div>
<div class="t" style="left:18px;top:671.7px;color:#d6d6d6">Layer Overrides</div>
<div style="left:0;top:694.0px;width:604px;height:54px;background:#3a3a3a;border-top:1px solid #1a1a1a"></div>
<div style="left:14px;top:699.7px;width:33px;height:33px;border-radius:50%;background:radial-gradient(circle at 38% 30%,#e8e8e8 0%,#b4b4b4 35%,#6c6c6c 75%,#3c3c3c 100%)"></div>
<div class="t" style="left:55px;top:701.0px;color:#9c9c9c;font-size:14.2px">Default-Material (Material)</div>
<svg style="left:572px;top:702px;width:14px;height:14px" viewBox="0 0 14 14"><circle cx="7" cy="7" r="6.3" fill="#c4c4c4"/><path d="M5 5.4 a2 2 0 1 1 3 1.7 q-1 .6 -1 1.6" fill="none" stroke="#3e3e3e" stroke-width="1.6"/><circle cx="7" cy="10.6" r="1" fill="#3e3e3e"/></svg>
<svg style="left:593px;top:702px;width:4px;height:14px" viewBox="0 0 4 14"><circle cx="2" cy="3" r="1.45" fill="#d0d0d0"/><circle cx="2" cy="7" r="1.45" fill="#d0d0d0"/><circle cx="2" cy="11" r="1.45" fill="#d0d0d0"/></svg>
<div class="arr r" style="left:6px;top:734.6px"></div>
<div class="t" style="left:52px;top:724.7px;color:#8a8a8a">Shader</div>
<div class="dd dis" style="left:104px;top:723.7px;width:399px;">Standard</div>
<div style="left:509px;top:723.7px;width:43px;height:18px;line-height:16px;background:#585858;border:1px solid #303030;border-radius:3px;color:#e6e6e6;text-align:center">Edit...</div>
<div style="left:556px;top:723.7px;width:42px;height:18px;background:#585858;border:1px solid #303030;border-radius:3px"></div>
<svg style="left:562px;top:726.7px;width:32px;height:12px" viewBox="0 0 32 12"><path d="M1 2 H3 M5 2 H13 M3 6 H5 M7 6 H13 M3 10 H5 M7 10 H13" stroke="#d0d0d0" stroke-width="1.5"/><path d="M20 4 H29 L24.5 9Z" fill="#d8d8d8"/></svg>
<div class="sep" style="top:747.7px;background:#1f1f1f"></div>
<div class="sep" style="top:759.0px;background:#2a2a2a"></div>
<div style="left:187px;top:769.9px;width:229px;height:22px;line-height:21px;background:#585858;border:1px solid #303030;border-radius:3px;color:#eeeeee;text-align:center">Add Component</div>
<div style="left:187px;top:792.0px;width:229px;height:315px;background:#383838;border:1px solid #232323"></div>
<div style="left:191px;top:798.1px;width:220px;height:17px;background:#2a2a2a;border:1.5px solid #3a79bb;border-radius:3px"></div>
<svg style="left:195px;top:802.5px;width:9px;height:9px" viewBox="0 0 9 9"><circle cx="3.4" cy="3.4" r="2.5" fill="none" stroke="#c8c8c8" stroke-width="1.4"/><path d="M5.2 5.2 L8.2 8.2" stroke="#c8c8c8" stroke-width="1.6"/></svg>
<div class="t" style="left:204px;top:798.3px;color:#eeeeee;font-size:12.4px">udon behaviour</div>
<div style="left:285.5px;top:799.8px;width:1px;height:13px;background:#e0e0e0"></div>
<svg style="left:397px;top:802.0px;width:9px;height:9px" viewBox="0 0 9 9"><path d="M1 1 L8 8 M8 1 L1 8" stroke="#d0d0d0" stroke-width="1.5"/></svg>
<div class="t b" style="left:187px;width:229px;text-align:center;top:822.0px;color:#e0e0e0">Search</div>
<div style="left:188px;top:840.3px;width:227px;height:20px;background:#3e5f96"></div>
<svg style="left:191px;top:843.1px;width:13px;height:15px" viewBox="0 0 13 15"><path d="M1 1.5 Q1 0.5 2 0.5 H9 L12.5 4 V13.5 Q12.5 14.5 11.5 14.5 H2 Q1 14.5 1 13.5Z" fill="#f4f4f4"/><path d="M8.4 4.2 H5.6 Q4.4 4.2 4.4 5.4 Q4.4 6.6 5.6 6.9 L7.4 7.4 Q8.6 7.8 8.6 9 Q8.6 10.4 7.4 10.4 H4.4" fill="none" stroke="#3f9a4c" stroke-width="1.6"/></svg>
<div class="t" style="left:206px;top:842.6px;color:#f4f4f4">Udon Behaviour</div>
<div class="t" style="left:297px;top:842.6px;color:#7488b4">(VRC.Udon)</div>
<div class="t" style="left:206px;top:863.2px;color:#d2d2d2">New script</div>
<svg style="left:395px;top:865.7px;width:8px;height:11px" viewBox="0 0 8 11"><path d="M1.5 1 L6 5.5 L1.5 10" fill="none" stroke="#a0a0a0" stroke-width="1.3"/></svg>
</div>
<div class="panel" style="left:2px;top:869px;width:1951px;height:541px;overflow:hidden">
<div class="tabbar" style="left:0;top:0;width:1951px;height:19px"></div>
<div class="tab" style="left:1px;width:79px;border-radius:3px 3px 0 0"></div>
<svg style="left:6px;top:4px;width:14px;height:12px" viewBox="0 0 14 12"><path d="M0.5 1.6 Q0.5 0.6 1.5 0.6 H5.2 L6.6 2.2 H12.5 Q13.5 2.2 13.5 3.2 V10.4 Q13.5 11.4 12.5 11.4 H1.5 Q0.5 11.4 0.5 10.4Z" fill="#d6d6d6"/></svg>
<div class="t" style="left:22px;top:3px;color:#d2d2d2">Project</div>
<svg style="left:88px;top:3px;width:12px;height:13px" viewBox="0 0 12 13"><rect x="0.8" y="0.8" width="10.4" height="11.4" rx="1.5" fill="#c8c8c8"/><path d="M3 3.6 H9 M3 6.5 H9 M3 9.4 H9" stroke="#282828" stroke-width="1.3"/></svg>
<div class="t" style="left:104px;top:3px;color:#d2d2d2">Console</div>
<svg style="left:1914px;top:3px;width:10.5px;height:11.5px;margin:1px 0 0 1px" viewBox="0 0 12 13"><rect x="1" y="5.5" width="10" height="6.5" rx="1" fill="none" stroke="#c4c4c4" stroke-width="1.6"/><path d="M3.2 5.5 V3.6 a2.6 2.6 0 0 1 5.2 0" fill="none" stroke="#c4c4c4" stroke-width="1.5"/></svg>
<svg style="left:1936px;top:3px;width:4px;height:14px" viewBox="0 0 4 14"><circle cx="2" cy="3" r="1.45" fill="#d0d0d0"/><circle cx="2" cy="7" r="1.45" fill="#d0d0d0"/><circle cx="2" cy="11" r="1.45" fill="#d0d0d0"/></svg>
<div class="tb" style="left:0;top:19px;width:1951px;height:20px"></div>
<svg style="left:6px;top:22px;width:26px;height:14px" viewBox="0 0 26 14"><path d="M6.5 1 V13 M0.5 7 H12.5" stroke="#e0e0e0" stroke-width="2.2"/><path d="M16.5 5 H24 L20.2 9.5Z" fill="#c4c4c4"/></svg>
<div class="fld" style="left:1485px;top:21px;width:301px;height:16px;border-radius:2px"></div>
<svg style="left:1490px;top:25px;width:9px;height:9px" viewBox="0 0 9 9"><circle cx="3.4" cy="3.4" r="2.5" fill="none" stroke="#c8c8c8" stroke-width="1.4"/><path d="M5.2 5.2 L8.2 8.2" stroke="#c8c8c8" stroke-width="1.6"/></svg>
<svg style="left:1786px;top:21px;width:15px;height:15px" viewBox="0 0 15 15"><rect x="4.5" y="1" width="9.5" height="8.5" rx="1" fill="none" stroke="#c4c4c4" stroke-width="1.4"/><circle cx="4.4" cy="9.6" r="2.6" fill="#3c3c3c" stroke="#c4c4c4" stroke-width="1.4"/><path d="M2.4 11.6 L0.6 13.8" stroke="#c4c4c4" stroke-width="1.5"/><path d="M8 5.2 H11.5" stroke="#c4c4c4" stroke-width="1.2"/></svg>
<svg style="left:1808px;top:21px;width:16px;height:15px" viewBox="0 0 16 15"><circle cx="5" cy="3.6" r="2.8" fill="#c8c8c8"/><path d="M1 13.5 V9.5 Q1 7 5 7 Q9 7 9 9.5 V13.5Z" fill="#c8c8c8"/><circle cx="11.6" cy="9" r="2.4" fill="#c8c8c8"/><path d="M8.6 14 Q8.6 11.6 11.6 11.6 Q14.6 11.6 14.6 14Z" fill="#c8c8c8"/></svg>
<svg style="left:1835px;top:22px;width:15px;height:13px" viewBox="0 0 15 13"><path d="M6.5 0.8 L14 2 L14.2 5 L6.6 12.2 L1 6.6Z" fill="#c8c8c8"/><circle cx="11.4" cy="3.8" r="1.1" fill="#3c3c3c"/></svg>
<svg style="left:1862px;top:21px;width:15px;height:15px" viewBox="0 0 15 15"><circle cx="7.5" cy="7.5" r="6.8" fill="#d2d2d2"/><rect x="6.5" y="3.2" width="2" height="5.4" fill="#3c3c3c"/><circle cx="7.5" cy="10.8" r="1.2" fill="#3c3c3c"/></svg>
<svg style="left:1889px;top:22px;width:13px;height:13px" viewBox="0 0 13 13"><path d="M6.5 0.5 L8.3 4.6 L12.7 5 L9.4 7.9 L10.4 12.3 L6.5 10 L2.6 12.3 L3.6 7.9 L0.3 5 L4.7 4.6Z" fill="#6e6e6e"/></svg>
<svg style="left:1911px;top:22px;width:20px;height:13px" viewBox="0 0 20 13"><path d="M1 6.5 Q9 -1.5 17 6.5 Q9 14.5 1 6.5Z" fill="none" stroke="#c8c8c8" stroke-width="1.4"/><circle cx="9" cy="6.5" r="2.4" fill="#c8c8c8"/><path d="M2.5 12 L16 1" stroke="#c8c8c8" stroke-width="1.5"/></svg>
<div class="t" style="left:1930px;top:21px;color:#c8c8c8">23</div>
<div style="left:0;top:39px;width:194px;height:502px;overflow:hidden">
<div style="left:0;top:96px;width:194px;height:16px;background:#4d4d4d"></div>
<div class="arr" style="left:5px;top:5px"></div>
<svg style="left:17px;top:1px;width:13px;height:13px" viewBox="0 0 13 13"><path d="M6.5 0.5 L8.3 4.6 L12.7 5 L9.4 7.9 L10.4 12.3 L6.5 10 L2.6 12.3 L3.6 7.9 L0.3 5 L4.7 4.6Z" fill="#d6d6d6"/></svg>
<div class="t b" style="left:33.7px;top:0px;color:#d2d2d2">Favorites</div>
<svg style="left:30px;top:18px;width:13px;height:13px" viewBox="0 0 13 13"><circle cx="5.2" cy="5.2" r="3.9" fill="none" stroke="#c8c8c8" stroke-width="1.4"/><path d="M8 8 L12 12" stroke="#c8c8c8" stroke-width="1.6"/></svg>
<div class="t" style="left:46.8px;top:16px;color:#d2d2d2">All Materials</div>
<svg style="left:30px;top:34px;width:13px;height:13px" viewBox="0 0 13 13"><circle cx="5.2" cy="5.2" r="3.9" fill="none" stroke="#c8c8c8" stroke-width="1.4"/><path d="M8 8 L12 12" stroke="#c8c8c8" stroke-width="1.6"/></svg>
<div class="t" style="left:46.8px;top:32px;color:#d2d2d2">All Models</div>
<svg style="left:30px;top:50px;width:13px;height:13px" viewBox="0 0 13 13"><circle cx="5.2" cy="5.2" r="3.9" fill="none" stroke="#c8c8c8" stroke-width="1.4"/><path d="M8 8 L12 12" stroke="#c8c8c8" stroke-width="1.6"/></svg>
<div class="t" style="left:46.8px;top:48px;color:#d2d2d2">All Prefabs</div>
<div class="arr" style="left:5px;top:85px"></div>
<svg style="left:17px;top:82px;width:15px;height:12px" viewBox="0 0 15 12"><path d="M0.5 1.6 Q0.5 0.6 1.5 0.6 H5 L6.4 2.2 H11.5 Q12.5 2.2 12.5 3.2 V4.4 H3.6 L0.5 10.6Z" fill="#d6d6d6"/><path d="M4 5.4 H15 L12 11.4 H1Z" fill="#d6d6d6"/></svg>
<div class="t b" style="left:33.7px;top:80px;color:#d2d2d2">Assets</div>
<svg style="left:30px;top:98px;width:14px;height:12px" viewBox="0 0 14 12"><path d="M1.2 1.8 Q1.2 1.2 1.8 1.2 H5 L6.4 2.9 H12.2 Q12.8 2.9 12.8 3.5 V10.2 Q12.8 10.8 12.2 10.8 H1.8 Q1.2 10.8 1.2 10.2Z" fill="none" stroke="#d6d6d6" stroke-width="1.4"/></svg>
<div class="t" style="left:46.8px;top:96px;color:#d2d2d2">On-Off-an-Object</div>
<div class="arr r" style="left:20px;top:116px"></div>
<svg style="left:30px;top:114px;width:14px;height:12px" viewBox="0 0 14 12"><path d="M0.5 1.6 Q0.5 0.6 1.5 0.6 H5.2 L6.6 2.2 H12.5 Q13.5 2.2 13.5 3.2 V10.4 Q13.5 11.4 12.5 11.4 H1.5 Q0.5 11.4 0.5 10.4Z" fill="#d6d6d6"/></svg>
<div class="t" style="left:46.8px;top:112px;color:#d2d2d2">Scenes</div>
<svg style="left:30px;top:130px;width:14px;height:12px" viewBox="0 0 14 12"><path d="M0.5 1.6 Q0.5 0.6 1.5 0.6 H5.2 L6.6 2.2 H12.5 Q13.5 2.2 13.5 3.2 V10.4 Q13.5 11.4 12.5 11.4 H1.5 Q0.5 11.4 0.5 10.4Z" fill="#d6d6d6"/></svg>
<div class="t" style="left:46.8px;top:128px;color:#d2d2d2">SerializedUdonPrograms</div>
<div class="arr r" style="left:20px;top:148px"></div>
<svg style="left:30px;top:146px;width:14px;height:12px" viewBox="0 0 14 12"><path d="M0.5 1.6 Q0.5 0.6 1.5 0.6 H5.2 L6.6 2.2 H12.5 Q13.5 2.2 13.5 3.2 V10.4 Q13.5 11.4 12.5 11.4 H1.5 Q0.5 11.4 0.5 10.4Z" fill="#d6d6d6"/></svg>
<div class="t" style="left:46.8px;top:144px;color:#d2d2d2">UdonSharp</div>
<div class="arr r" style="left:20px;top:164px"></div>
<svg style="left:30px;top:162px;width:14px;height:12px" viewBox="0 0 14 12"><path d="M0.5 1.6 Q0.5 0.6 1.5 0.6 H5.2 L6.6 2.2 H12.5 Q13.5 2.2 13.5 3.2 V10.4 Q13.5 11.4 12.5 11.4 H1.5 Q0.5 11.4 0.5 10.4Z" fill="#d6d6d6"/></svg>
<div class="t" style="left:46.8px;top:160px;color:#d2d2d2">XR</div>
<div class="arr" style="left:5px;top:181px"></div>
<svg style="left:17px;top:178px;width:15px;height:12px" viewBox="0 0 15 12"><path d="M0.5 1.6 Q0.5 0.6 1.5 0.6 H5 L6.4 2.2 H11.5 Q12.5 2.2 12.5 3.2 V4.4 H3.6 L0.5 10.6Z" fill="#d6d6d6"/><path d="M4 5.4 H15 L12 11.4 H1Z" fill="#d6d6d6"/></svg>
<div class="t b" style="left:33.7px;top:176px;color:#d2d2d2">Packages</div>
<div class="arr r" style="left:20px;top:196px"></div>
<svg style="left:30px;top:194px;width:14px;height:12px" viewBox="0 0 14 12"><path d="M0.5 1.6 Q0.5 0.6 1.5 0.6 H5.2 L6.6 2.2 H12.5 Q13.5 2.2 13.5 3.2 V10.4 Q13.5 11.4 12.5 11.4 H1.5 Q0.5 11.4 0.5 10.4Z" fill="#d6d6d6"/></svg>
<div class="t" style="left:46.8px;top:192px;color:#d2d2d2">AI Navigation</div>
<div class="arr r" style="left:20px;top:212px"></div>
<svg style="left:30px;top:210px;width:14px;height:12px" viewBox="0 0 14 12"><path d="M0.5 1.6 Q0.5 0.6 1.5 0.6 H5.2 L6.6 2.2 H12.5 Q13.5 2.2 13.5 3.2 V10.4 Q13.5 11.4 12.5 11.4 H1.5 Q0.5 11.4 0.5 10.4Z" fill="#d6d6d6"/></svg>
<div class="t" style="left:46.8px;top:208px;color:#d2d2d2">Burst</div>
<div class="arr r" style="left:20px;top:228px"></div>
<svg style="left:30px;top:226px;width:14px;height:12px" viewBox="0 0 14 12"><path d="M0.5 1.6 Q0.5 0.6 1.5 0.6 H5.2 L6.6 2.2 H12.5 Q13.5 2.2 13.5 3.2 V10.4 Q13.5 11.4 12.5 11.4 H1.5 Q0.5 11.4 0.5 10.4Z" fill="#d6d6d6"/></svg>
<div class="t" style="left:46.8px;top:224px;color:#d2d2d2">Cinemachine</div>
<div class="arr r" style="left:20px;top:244px"></div>
<svg style="left:30px;top:242px;width:14px;height:12px" viewBox="0 0 14 12"><path d="M0.5 1.6 Q0.5 0.6 1.5 0.6 H5.2 L6.6 2.2 H12.5 Q13.5 2.2 13.5 3.2 V10.4 Q13.5 11.4 12.5 11.4 H1.5 Q0.5 11.4 0.5 10.4Z" fill="#d6d6d6"/></svg>
<div class="t" style="left:46.8px;top:240px;color:#d2d2d2">Collections</div>
<div class="arr r" style="left:20px;top:260px"></div>
<svg style="left:30px;top:258px;width:14px;height:12px" viewBox="0 0 14 12"><path d="M0.5 1.6 Q0.5 0.6 1.5 0.6 H5.2 L6.6 2.2 H12.5 Q13.5 2.2 13.5 3.2 V10.4 Q13.5 11.4 12.5 11.4 H1.5 Q0.5 11.4 0.5 10.4Z" fill="#d6d6d6"/></svg>
<div class="t" style="left:46.8px;top:256px;color:#d2d2d2">Custom NUnit</div>
<div class="arr r" style="left:20px;top:276px"></div>
<svg style="left:30px;top:274px;width:14px;height:12px" viewBox="0 0 14 12"><path d="M0.5 1.6 Q0.5 0.6 1.5 0.6 H5.2 L6.6 2.2 H12.5 Q13.5 2.2 13.5 3.2 V10.4 Q13.5 11.4 12.5 11.4 H1.5 Q0.5 11.4 0.5 10.4Z" fill="#d6d6d6"/></svg>
<div class="t" style="left:46.8px;top:272px;color:#d2d2d2">Input System</div>
<div class="arr r" style="left:20px;top:292px"></div>
<svg style="left:30px;top:290px;width:14px;height:12px" viewBox="0 0 14 12"><path d="M0.5 1.6 Q0.5 0.6 1.5 0.6 H5.2 L6.6 2.2 H12.5 Q13.5 2.2 13.5 3.2 V10.4 Q13.5 11.4 12.5 11.4 H1.5 Q0.5 11.4 0.5 10.4Z" fill="#d6d6d6"/></svg>
<div class="t" style="left:46.8px;top:288px;color:#d2d2d2">JetBrains Rider Editor</div>
<div class="arr r" style="left:20px;top:308px"></div>
<svg style="left:30px;top:306px;width:14px;height:12px" viewBox="0 0 14 12"><path d="M0.5 1.6 Q0.5 0.6 1.5 0.6 H5.2 L6.6 2.2 H12.5 Q13.5 2.2 13.5 3.2 V10.4 Q13.5 11.4 12.5 11.4 H1.5 Q0.5 11.4 0.5 10.4Z" fill="#d6d6d6"/></svg>
<div class="t" style="left:46.8px;top:304px;color:#d2d2d2">Mathematics</div>
<div class="arr r" style="left:20px;top:324px"></div>
<svg style="left:30px;top:322px;width:14px;height:12px" viewBox="0 0 14 12"><path d="M0.5 1.6 Q0.5 0.6 1.5 0.6 H5.2 L6.6 2.2 H12.5 Q13.5 2.2 13.5 3.2 V10.4 Q13.5 11.4 12.5 11.4 H1.5 Q0.5 11.4 0.5 10.4Z" fill="#d6d6d6"/></svg>
<div class="t" style="left:46.8px;top:320px;color:#d2d2d2">Mono Cecil</div>
<div class="arr r" style="left:20px;top:340px"></div>
<svg style="left:30px;top:338px;width:14px;height:12px" viewBox="0 0 14 12"><path d="M0.5 1.6 Q0.5 0.6 1.5 0.6 H5.2 L6.6 2.2 H12.5 Q13.5 2.2 13.5 3.2 V10.4 Q13.5 11.4 12.5 11.4 H1.5 Q0.5 11.4 0.5 10.4Z" fill="#d6d6d6"/></svg>
<div class="t" style="left:46.8px;top:336px;color:#d2d2d2">Newtonsoft Json</div>
<div class="arr r" style="left:20px;top:356px"></div>
<svg style="left:30px;top:354px;width:14px;height:12px" viewBox="0 0 14 12"><path d="M0.5 1.6 Q0.5 0.6 1.5 0.6 H5.2 L6.6 2.2 H12.5 Q13.5 2.2 13.5 3.2 V10.4 Q13.5 11.4 12.5 11.4 H1.5 Q0.5 11.4 0.5 10.4Z" fill="#d6d6d6"/></svg>
<div class="t" style="left:46.8px;top:352px;color:#d2d2d2">Oculus XR Plugin</div>
<div class="arr r" style="left:20px;top:372px"></div>
<svg style="left:30px;top:370px;width:14px;height:12px" viewBox="0 0 14 12"><path d="M0.5 1.6 Q0.5 0.6 1.5 0.6 H5.2 L6.6 2.2 H12.5 Q13.5 2.2 13.5 3.2 V10.4 Q13.5 11.4 12.5 11.4 H1.5 Q0.5 11.4 0.5 10.4Z" fill="#d6d6d6"/></svg>
<div class="t" style="left:46.8px;top:368px;color:#d2d2d2">Post Processing</div>
<div class="arr r" style="left:20px;top:388px"></div>
<svg style="left:30px;top:386px;width:14px;height:12px" viewBox="0 0 14 12"><path d="M0.5 1.6 Q0.5 0.6 1.5 0.6 H5.2 L6.6 2.2 H12.5 Q13.5 2.2 13.5 3.2 V10.4 Q13.5 11.4 12.5 11.4 H1.5 Q0.5 11.4 0.5 10.4Z" fill="#d6d6d6"/></svg>
<div class="t" style="left:46.8px;top:384px;color:#d2d2d2">Test Framework</div>
<div class="arr r" style="left:20px;top:404px"></div>
<svg style="left:30px;top:402px;width:14px;height:12px" viewBox="0 0 14 12"><path d="M0.5 1.6 Q0.5 0.6 1.5 0.6 H5.2 L6.6 2.2 H12.5 Q13.5 2.2 13.5 3.2 V10.4 Q13.5 11.4 12.5 11.4 H1.5 Q0.5 11.4 0.5 10.4Z" fill="#d6d6d6"/></svg>
<div class="t" style="left:46.8px;top:400px;color:#d2d2d2">TextMeshPro</div>
<div class="arr r" style="left:20px;top:420px"></div>
<svg style="left:30px;top:418px;width:14px;height:12px" viewBox="0 0 14 12"><path d="M0.5 1.6 Q0.5 0.6 1.5 0.6 H5.2 L6.6 2.2 H12.5 Q13.5 2.2 13.5 3.2 V10.4 Q13.5 11.4 12.5 11.4 H1.5 Q0.5 11.4 0.5 10.4Z" fill="#d6d6d6"/></svg>
<div class="t" style="left:46.8px;top:416px;color:#d2d2d2">Timeline</div>
<div class="arr r" style="left:20px;top:436px"></div>
<svg style="left:30px;top:434px;width:14px;height:12px" viewBox="0 0 14 12"><path d="M0.5 1.6 Q0.5 0.6 1.5 0.6 H5.2 L6.6 2.2 H12.5 Q13.5 2.2 13.5 3.2 V10.4 Q13.5 11.4 12.5 11.4 H1.5 Q0.5 11.4 0.5 10.4Z" fill="#d6d6d6"/></svg>
<div class="t" style="left:46.8px;top:432px;color:#d2d2d2">Unity UI</div>
<div class="arr r" style="left:20px;top:452px"></div>
<svg style="left:30px;top:450px;width:14px;height:12px" viewBox="0 0 14 12"><path d="M0.5 1.6 Q0.5 0.6 1.5 0.6 H5.2 L6.6 2.2 H12.5 Q13.5 2.2 13.5 3.2 V10.4 Q13.5 11.4 12.5 11.4 H1.5 Q0.5 11.4 0.5 10.4Z" fill="#d6d6d6"/></svg>
<div class="t" style="left:46.8px;top:448px;color:#d2d2d2">Visual Studio Code Editor</div>
<div class="arr r" style="left:20px;top:468px"></div>
<svg style="left:30px;top:466px;width:14px;height:12px" viewBox="0 0 14 12"><path d="M0.5 1.6 Q0.5 0.6 1.5 0.6 H5.2 L6.6 2.2 H12.5 Q13.5 2.2 13.5 3.2 V10.4 Q13.5 11.4 12.5 11.4 H1.5 Q0.5 11.4 0.5 10.4Z" fill="#d6d6d6"/></svg>
<div class="t" style="left:46.8px;top:464px;color:#d2d2d2">Visual Studio Editor</div>
<div class="arr r" style="left:20px;top:484px"></div>
<svg style="left:30px;top:482px;width:14px;height:12px" viewBox="0 0 14 12"><path d="M0.5 1.6 Q0.5 0.6 1.5 0.6 H5.2 L6.6 2.2 H12.5 Q13.5 2.2 13.5 3.2 V10.4 Q13.5 11.4 12.5 11.4 H1.5 Q0.5 11.4 0.5 10.4Z" fill="#d6d6d6"/></svg>
<div class="t" style="left:46.8px;top:480px;color:#d2d2d2">VRChat Package Resolve</div>
<div class="arr r" style="left:20px;top:500px"></div>
<svg style="left:30px;top:498px;width:14px;height:12px" viewBox="0 0 14 12"><path d="M0.5 1.6 Q0.5 0.6 1.5 0.6 H5.2 L6.6 2.2 H12.5 Q13.5 2.2 13.5 3.2 V10.4 Q13.5 11.4 12.5 11.4 H1.5 Q0.5 11.4 0.5 10.4Z" fill="#d6d6d6"/></svg>
<div class="t" style="left:46.8px;top:496px;color:#d2d2d2">VRChat SDK - Base</div>
</div>
<div style="left:194px;top:39px;width:12px;height:502px;background:#363636"></div>
<div style="left:196.5px;top:57px;width:7px;height:417px;background:#5e5e5e;border-radius:3.5px"></div>
<div style="left:196px;top:46px;border-left:4px solid transparent;border-right:4px solid transparent;border-bottom:5px solid #c4c4c4;width:0;height:0"></div>
<div style="left:196px;top:530px;border-left:4px solid transparent;border-right:4px solid transparent;border-top:5px solid #c4c4c4;width:0;height:0"></div>
<div style="left:206px;top:39px;width:1.5px;height:502px;background:#242424"></div>
<div style="left:207.5px;top:39px;width:1743.5px;height:502px;background:#333333"></div>
<div style="left:207.5px;top:39px;width:1743.5px;height:22px;background:#3c3c3c;border-bottom:1px solid #2a2a2a"></div>
<div style="left:1803.6px;top:21px;width:1px;height:16px;background:#2e2e2e"></div>
<div style="left:1829.8px;top:21px;width:1px;height:16px;background:#2e2e2e"></div>
<div style="left:1856.0px;top:21px;width:1px;height:16px;background:#2e2e2e"></div>
<div style="left:1882.5px;top:21px;width:1px;height:16px;background:#2e2e2e"></div>
<div style="left:1908.8px;top:21px;width:1px;height:16px;background:#2e2e2e"></div>
<div class="t" style="left:211px;top:42px;color:#b0b0b0">Assets</div>
<svg style="left:254px;top:45px;width:8px;height:11px" viewBox="0 0 8 11"><path d="M1.5 1 L6 5.5 L1.5 10" fill="none" stroke="#8a8a8a" stroke-width="1.3"/></svg>
<div class="t b" style="left:266px;top:42px;color:#d8d8d8">On-Off-an-Object</div>
<div class="t" style="left:207px;width:1744px;text-align:center;top:73px;color:#7c7c7c;font-size:11.8px">This folder is empty</div>
<div style="left:207.5px;top:520px;width:1743.5px;height:21px;background:#3c3c3c;border-top:1px solid #2c2c2c"></div>
<div style="left:1880px;top:531px;width:55px;height:1.5px;background:#6a6a6a"></div>
<div style="left:1906px;top:526px;width:11px;height:11px;border-radius:50%;background:#c8c8c8"></div>
</div>
<div style="left:0;top:1410px;width:2560px;height:20px;background:#191919"></div>
<div style="left:0;top:1430px;width:2560px;height:4px;background:#3a3a3a"></div>
<div style="left:1236px;top:1431.5px;width:30px;height:3px;background:#3d6fa8"></div>
<div style="left:1278px;top:1432px;width:230px;height:2px;background:#6e6e6e;opacity:0.7"></div>
<div style="left:2420px;top:1430.5px;width:140px;height:4px;background:#555555"></div>
<svg style="left:3px;top:1413px;width:16px;height:17px" viewBox="0 0 16 17"><circle cx="8" cy="7.5" r="7" fill="#e8e8e8"/><path d="M9 13 L13.5 16.5 L12.5 11Z" fill="#e8e8e8"/><rect x="7" y="3" width="2.2" height="5.6" fill="#4a4a4a"/><circle cx="8.1" cy="11" r="1.3" fill="#4a4a4a"/></svg>
<div class="t" style="left:21px;top:1414.5px;color:#d2d2d2">Force-enabling Fog</div>
<svg style="left:2460px;top:1413px;width:16px;height:16px" viewBox="0 0 16 16"><ellipse cx="8" cy="8.5" rx="4.2" ry="5.4" fill="#c8c8c8"/><path d="M1.5 4 L5 7 M14.5 4 L11 7 M1 9 H4 M15 9 H12 M2 14 L5 11.6 M14 14 L11 11.6" stroke="#c8c8c8" stroke-width="1.3"/><path d="M2 1.5 L14 15" stroke="#191919" stroke-width="2.4"/><path d="M3 1 L15 14.5" stroke="#c8c8c8" stroke-width="1.2"/></svg>
<svg style="left:2486px;top:1413px;width:16px;height:16px" viewBox="0 0 16 16"><ellipse cx="8" cy="4.4" rx="5.6" ry="2.4" fill="#c8c8c8"/><path d="M2.4 6.4 Q8 10 13.6 6.4 V8.6 Q8 12.2 2.4 8.6Z M2.4 10.4 Q8 14 13.6 10.4 V12.4 Q8 16 2.4 12.4Z" fill="#c8c8c8"/><path d="M2 1.5 L14 15" stroke="#191919" stroke-width="2.4"/><path d="M3 1 L15 14.5" stroke="#c8c8c8" stroke-width="1.2"/></svg>
<svg style="left:2511px;top:1413px;width:16px;height:16px" viewBox="0 0 16 16"><path d="M3 8 a5 5 0 0 1 9.4 -2.2 M13 8 a5 5 0 0 1 -9.4 2.2" fill="none" stroke="#c8c8c8" stroke-width="1.6"/><path d="M13.6 2.6 V6.6 H9.6Z M2.4 13.4 V9.4 H6.4Z" fill="#c8c8c8"/><circle cx="8" cy="8" r="1.8" fill="#c8c8c8"/><path d="M2 1.5 L14 15" stroke="#191919" stroke-width="2.4"/><path d="M3 1 L15 14.5" stroke="#c8c8c8" stroke-width="1.2"/></svg>
<svg style="left:2537px;top:1413px;width:16px;height:16px" viewBox="0 0 16 16"><circle cx="8" cy="8" r="6.6" fill="none" stroke="#c8c8c8" stroke-width="1.4"/><path d="M5 8.2 L7.2 10.4 L11.2 5.8" fill="none" stroke="#c8c8c8" stroke-width="1.6"/></svg>
<div style="left:2557px;top:0;width:3px;height:1434px;background:linear-gradient(90deg,rgba(40,40,40,0.0),rgba(30,30,30,0.9))"></div>
</div>
</body></html>
